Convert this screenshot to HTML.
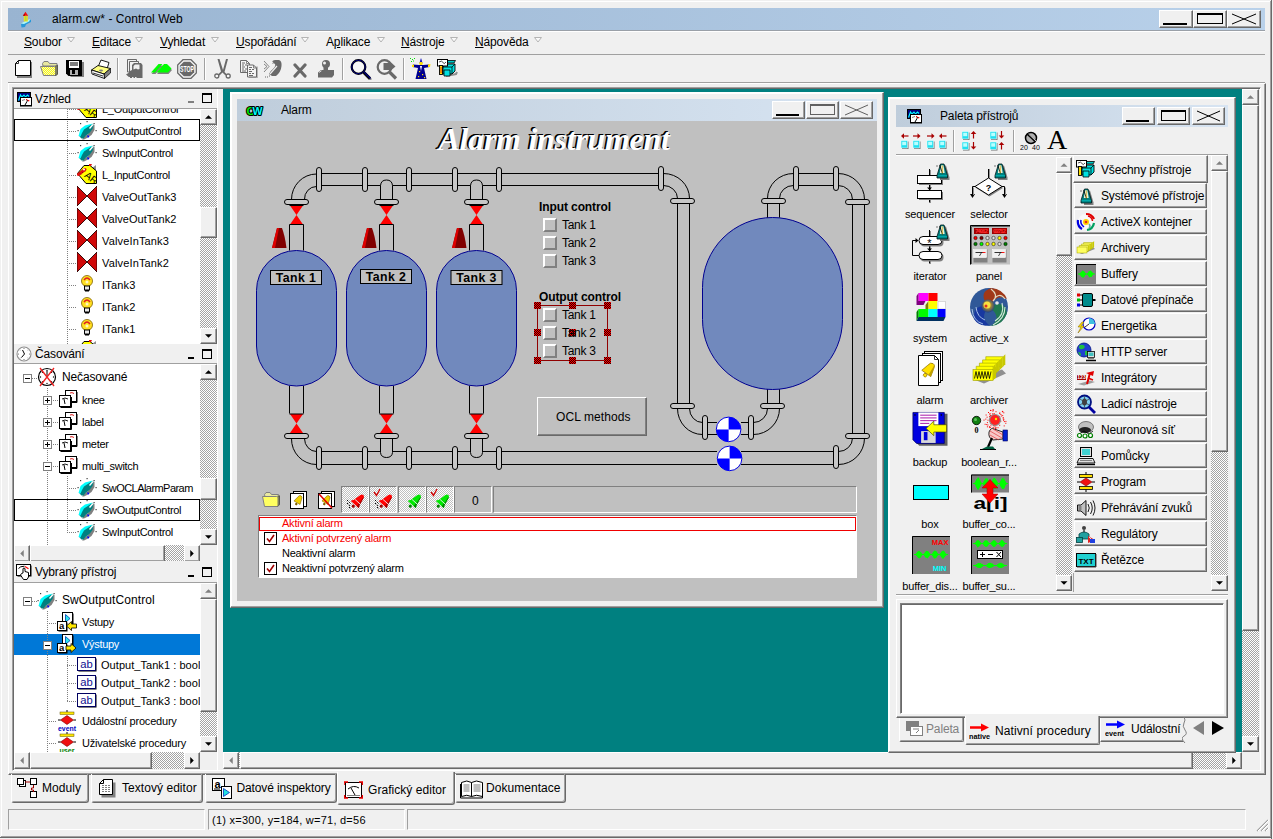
<!DOCTYPE html>
<html lang="cs"><head><meta charset="utf-8"><title>alarm.cw* - Control Web</title>
<style>
html,body{margin:0;padding:0}
body{width:1273px;height:839px;overflow:hidden;background:#f0f0f0;position:relative;
 font-family:"Liberation Sans",sans-serif;font-size:12px;color:#000}
div,span,svg{position:absolute;box-sizing:border-box}
span{white-space:nowrap;line-height:1}
.ui{font-size:12px;letter-spacing:-0.15px}
.ms{font-size:11px;letter-spacing:-0.3px}
.rb{border:1px solid;border-color:#fff #696969 #696969 #fff;background:#f0f0f0}
.rb2{border:1px solid;border-color:#fff #696969 #696969 #fff;background:#f0f0f0;box-shadow:inset -1px -1px 0 #a0a0a0}
.sk{border:1px solid;border-color:#808080 #fff #fff #808080}
.sk2{border:1px solid;border-color:#808080 #fff #fff #808080;box-shadow:inset 1px 1px 0 #696969}
.dith{background-image:conic-gradient(#fff 25%,#a4a4a4 0 50%,#fff 0 75%,#a4a4a4 0);background-size:2px 2px}
.dith2{background-image:conic-gradient(#fff 25%,#c0c0c0 0 50%,#fff 0 75%,#c0c0c0 0);background-size:2px 2px}
.sel{background:#0078d7;color:#fff}
</style></head><body>
<!-- p_chrome -->
<div style="left:0px;top:0px;width:1273px;height:1px;background:#f0f0f0"></div>
<div style="left:1px;top:1px;width:1270px;height:1px;background:#fff"></div>
<div style="left:1px;top:1px;width:1px;height:836px;background:#fff"></div>
<div style="left:1270px;top:1px;width:1px;height:837px;background:#a0a0a0"></div>
<div style="left:1271px;top:0px;width:1px;height:839px;background:#696969"></div>
<div style="left:1px;top:836px;width:1270px;height:1px;background:#a0a0a0"></div>
<div style="left:0px;top:837px;width:1272px;height:1px;background:#696969"></div>
<div style="left:8px;top:8px;width:1257px;height:22px;background:linear-gradient(90deg,rgb(153,180,209),rgb(185,209,234))"></div>
<svg style="left:20px;top:11px;" width="12" height="17" viewBox="0 0 12 17"><path d="M1 13 L7 9.500 L11 8.500 L11 11 L6 13.500 L5 16 L1.500 16.500 Z" fill="#2898d8"/><path d="M1 12.500 L6 9.500 L10.500 8 L9 10.500 L4 13Z" fill="#b0f8f8"/><rect x="3.800" y="4.500" width="4" height="6" fill="#f0d820"/><path d="M5.800 5 v5" stroke="#a0e040" stroke-width="1.200"/><path d="M5.500 0.800 L8.200 4.800 H2.800Z" fill="#f01010"/><path d="M3 4.800 L4.500 2.500 L5 4.800Z" fill="#a00000"/></svg>
<span class="ui" style="left:52px;top:12.5px;letter-spacing:0.04px">alarm.cw* - Control Web</span>
<div class="rb2" style="left:1159px;top:10px;width:34px;height:18px;"><svg style="left:0px;top:0px;" width="32" height="16" viewBox="0 0 32 16"><rect x="3" y="12" width="24" height="2" fill="#000"/></svg>
</div>
<div class="rb2" style="left:1193px;top:10px;width:34px;height:18px;"><svg style="left:0px;top:0px;" width="32" height="16" viewBox="0 0 32 16"><rect x="3.5" y="2.5" width="25" height="10" fill="none" stroke="#000"/><rect x="3" y="2" width="26" height="2" fill="#000"/></svg>
</div>
<div class="rb2" style="left:1227px;top:10px;width:34px;height:18px;"><svg style="left:0px;top:0px;" width="32" height="16" viewBox="0 0 32 16"><path d="M4 3 L28 13 M4 13 L28 3" stroke="#000" stroke-width="1" fill="none"/></svg>
</div>
<span class="ui" style="left:24px;top:36px;"><u>S</u>oubor</span>
<svg style="left:67px;top:37px;" width="9" height="7" viewBox="0 0 9 7"><path d="M0.5 0.5h7l-3.5 4.5z" fill="#fafafa" stroke="#b4b4b4" stroke-width="1"/></svg>
<span class="ui" style="left:92px;top:36px;"><u>E</u>ditace</span>
<svg style="left:135px;top:37px;" width="9" height="7" viewBox="0 0 9 7"><path d="M0.5 0.5h7l-3.5 4.5z" fill="#fafafa" stroke="#b4b4b4" stroke-width="1"/></svg>
<span class="ui" style="left:160px;top:36px;"><u>V</u>yhledat</span>
<svg style="left:211px;top:37px;" width="9" height="7" viewBox="0 0 9 7"><path d="M0.5 0.5h7l-3.5 4.5z" fill="#fafafa" stroke="#b4b4b4" stroke-width="1"/></svg>
<span class="ui" style="left:236px;top:36px;"><u>U</u>spořádání</span>
<svg style="left:301px;top:37px;" width="9" height="7" viewBox="0 0 9 7"><path d="M0.5 0.5h7l-3.5 4.5z" fill="#fafafa" stroke="#b4b4b4" stroke-width="1"/></svg>
<span class="ui" style="left:326px;top:36px;">A<u>p</u>likace</span>
<svg style="left:377px;top:37px;" width="9" height="7" viewBox="0 0 9 7"><path d="M0.5 0.5h7l-3.5 4.5z" fill="#fafafa" stroke="#b4b4b4" stroke-width="1"/></svg>
<span class="ui" style="left:401px;top:36px;"><u>N</u>ástroje</span>
<svg style="left:450px;top:37px;" width="9" height="7" viewBox="0 0 9 7"><path d="M0.5 0.5h7l-3.5 4.5z" fill="#fafafa" stroke="#b4b4b4" stroke-width="1"/></svg>
<span class="ui" style="left:475px;top:36px;"><u>N</u>ápověda</span>
<svg style="left:534px;top:37px;" width="9" height="7" viewBox="0 0 9 7"><path d="M0.5 0.5h7l-3.5 4.5z" fill="#fafafa" stroke="#b4b4b4" stroke-width="1"/></svg>
<div style="left:8px;top:30px;width:1257px;height:1px;background:#9aa0a8"></div>
<div style="left:8px;top:31px;width:1257px;height:1px;background:#fff"></div>
<div style="left:8px;top:54px;width:1257px;height:1px;background:#a0a0a0"></div>
<div style="left:8px;top:82px;width:1257px;height:1px;background:#a0a0a0"></div>
<div style="left:8px;top:83px;width:1257px;height:1px;background:#fff"></div>
<div style="left:117px;top:58px;width:1px;height:22px;background:#a0a0a0"></div>
<div style="left:118px;top:58px;width:1px;height:22px;background:#fff"></div>
<div style="left:204px;top:58px;width:1px;height:22px;background:#a0a0a0"></div>
<div style="left:205px;top:58px;width:1px;height:22px;background:#fff"></div>
<div style="left:342px;top:58px;width:1px;height:22px;background:#a0a0a0"></div>
<div style="left:343px;top:58px;width:1px;height:22px;background:#fff"></div>
<div style="left:403px;top:58px;width:1px;height:22px;background:#a0a0a0"></div>
<div style="left:404px;top:58px;width:1px;height:22px;background:#fff"></div>
<svg style="left:15px;top:60px;" width="18" height="18" viewBox="0 0 18 18"><path d="M3 2h14v16H2V5z" fill="#808080"/><path d="M3.5 0.5H15.5V15.5H0.5V3.5Z" fill="#fff" stroke="#000"/><path d="M3.5 0.5V3.5H0.5" fill="none" stroke="#000" stroke-width=".8"/></svg>
<svg style="left:40px;top:60px;" width="19" height="17" viewBox="0 0 19 17"><defs><pattern id="yd" width="2" height="2" patternUnits="userSpaceOnUse"><rect width="2" height="2" fill="#ffff00"/><rect width="1" height="1" fill="#f0f0d0"/><rect x="1" y="1" width="1" height="1" fill="#f0f0d0"/></pattern></defs><path d="M2.5 3.5 L4 1.5 H8 L9.5 3.5 H17 V6 H3Z" fill="#e8e8a0" stroke="#808080"/><path d="M0.5 6.5 H14.5 L17.5 5 V14.5 L16 15.5 H3.5 Z" fill="url(#yd)" stroke="#808080"/><path d="M15 7 L17.5 5.5 V14 L15 15.5" fill="#808060" stroke="#404040" stroke-width=".6"/></svg>
<svg style="left:66px;top:60px;" width="19" height="18" viewBox="0 0 19 18"><path d="M3 2h15v15H5l-2-2z" fill="#808080"/><path d="M0 0H16V16H2.5L0 13.5Z" fill="#000"/><rect x="3" y="1" width="10" height="7" fill="#fff"/><path d="M4 3h8M4 5h8" stroke="#000" stroke-width="1"/><rect x="4" y="10" width="8" height="5" fill="#b0b0b0"/><rect x="6" y="10" width="3" height="4" fill="#000"/></svg>
<svg style="left:91px;top:59px;" width="21" height="20" viewBox="0 0 21 20"><path d="M7 8 L10 1 L18 3.5 L16 10Z" fill="#fff" stroke="#000" stroke-width=".9"/><path d="M0.5 11 L7 6.5 L19.5 9.5 L13 15Z" fill="#ffff80" stroke="#000" stroke-width=".9"/><path d="M13 15 L19.5 9.5 V14 L13.5 19.5Z" fill="#808080" stroke="#000" stroke-width=".7"/><path d="M0.5 11 L13 15 L13.5 19.5 L1 15Z" fill="#fff" stroke="#000" stroke-width=".9"/><path d="M2 14 L12 17" stroke="#000" stroke-width=".8"/><ellipse cx="10" cy="11.5" rx="2" ry="1" fill="#808080"/></svg>
<svg style="left:126px;top:59px;" width="18" height="20" viewBox="0 0 18 20"><path d="M1.5 0.5H10.5V13H1.5Z" fill="#f0f0f0" stroke="#696969"/><path d="M3.5 2.5H12.5V14H3.5Z" fill="#f0f0f0" stroke="#696969"/><path d="M6 6 L8 4 H15 L16.5 6 V19 H4 L0 15.5 L4 13 V12 L6 11Z" fill="#696969"/><path d="M7.5 7 L9 5.5 H13.5 V10 L12 10.5 L10 9.5 L7.5 10.5Z" fill="#f0f0f0"/><path d="M2 18.5h2M6 18.5h1.5M9 18.5h1.5" stroke="#f0f0f0"/></svg>
<svg style="left:151px;top:63px;" width="22" height="12" viewBox="0 0 22 12"><path d="M0 9.500 L7.500 1 H11.500 L4 9.500Z M5.500 9.500 L13 1 H16 L20.500 5.500 L17 9.500Z" fill="#808080" transform="translate(0.500,1.500)"/><path d="M0 9.500 L7.500 1 H11.500 L4 9.500Z" fill="#00ff00"/><path d="M5.500 9.500 L13 1 H16 L20.500 5.500 L17 9.500Z" fill="#00ff00"/></svg>
<svg style="left:177px;top:59px;" width="20" height="20" viewBox="0 0 20 20"><path d="M6 0.7 H14 L19.3 6 V14 L14 19.3 H6 L0.7 14 V6Z" fill="#f8f8f8" stroke="#696969" stroke-width="1.3"/><path d="M6.8 2.8 H13.2 L17.2 6.8 V13.2 L13.2 17.2 H6.8 L2.8 13.2 V6.8Z" fill="#696969"/><text x="10" y="13.2" text-anchor="middle" font-family="Liberation Sans,sans-serif" font-size="8.5" font-weight="bold" fill="#fff" textLength="14" lengthAdjust="spacingAndGlyphs">STOP</text></svg>
<svg style="left:214px;top:59px;" width="17" height="20" viewBox="0 0 17 20"><path d="M3.5 0 L5.5 0 L9 11 L12 0 L14 0 L10.5 13 L13 15.5 L11.5 16.5 L8.5 13.5 L5.5 16.5 L4 15.5 L7 12.5Z" fill="#696969"/><circle cx="2.8" cy="17" r="2" fill="#f8f8f8" stroke="#696969" stroke-width="1.3"/><circle cx="14.2" cy="17" r="2" fill="#f8f8f8" stroke="#696969" stroke-width="1.3"/></svg>
<svg style="left:240px;top:60px;" width="18" height="18" viewBox="0 0 18 18"><g><path d="M0.5 0.5H6.5L9.5 3.5V12.5H0.5Z" fill="#f4f4f4" stroke="#696969"/><path d="M6.5 0.5V3.5H9.5" fill="none" stroke="#696969" stroke-width=".8"/><path d="M2 3h3M2 5h2M5 5h2M2 7h3M2 9h2M5 9h2M2 11h4" stroke="#696969" stroke-width="1"/></g><g transform="translate(7,4.5)"><path d="M2 2h9v12H2z" fill="#808080" opacity=".5"/><path d="M0.5 0.5H6.5L9.5 3.5V12.5H0.5Z" fill="#f4f4f4" stroke="#696969"/><path d="M6.5 0.5V3.5H9.5" fill="none" stroke="#696969" stroke-width=".8"/><path d="M2 3h3M2 5h2M5 5h2M2 7h3M2 9h2M5 9h2M2 11h4" stroke="#696969" stroke-width="1"/></g></svg>
<svg style="left:263px;top:60px;" width="20" height="18" viewBox="0 0 20 18"><path d="M1 1 L6 6.5 L1 12 M1 4 L4 6.5 L1 9" stroke="#696969" stroke-width=".8" fill="none"/><path d="M9 1.5 Q10 0 12 0 H16 Q19 1 18.5 6 Q18 12 13 16 H9 L6 14 Q7 11 10 9 Q13 6 12 4 Q11 3 9 3.5Z" fill="#696969"/><path d="M14 6 L7 14" stroke="#f0f0f0" stroke-width="1.2"/><circle cx="9.5" cy="2.3" r=".8" fill="#f0f0f0"/><path d="M2 17h1M4 17h1M6 16h1" stroke="#696969"/></svg>
<svg style="left:293px;top:63px;" width="14" height="15" viewBox="0 0 14 15"><path d="M2 2 L12 13 M12 2 L2 13" stroke="#696969" stroke-width="3.2" stroke-linecap="round"/></svg>
<svg style="left:317px;top:60px;" width="18" height="18" viewBox="0 0 18 18"><circle cx="9" cy="4" r="4" fill="#696969"/><circle cx="7.5" cy="3" r="1.5" fill="#f0f0f0"/><path d="M6.5 6 H11 V10 H17 V15 L15 17.5 H1 V12.5 L4 10 H6.5Z" fill="#696969"/><path d="M2 12.5 L4.5 10.8" stroke="#f0f0f0" stroke-width=".8"/></svg>
<svg style="left:350px;top:58px;" width="22" height="22" viewBox="0 0 22 22"><path d="M14 15 L21 22" stroke="#909090" stroke-width="3"/><circle cx="8.5" cy="9" r="6.8" fill="#f8f8f8" stroke="#000" stroke-width="2.2"/><circle cx="8.5" cy="9" r="6.8" fill="none" stroke="#000080" stroke-width="1"/><path d="M13.5 14 L20 20.5" stroke="#000" stroke-width="3"/><path d="M14 14 L20.5 20.5" stroke="#000080" stroke-width="1.2"/></svg>
<svg style="left:376px;top:58px;" width="22" height="22" viewBox="0 0 22 22"><circle cx="8.5" cy="9" r="6.8" fill="#f0f0f0" stroke="#696969" stroke-width="2.2"/><path d="M13.5 14 L20 20.5" stroke="#696969" stroke-width="3.2"/><path d="M7.5 5 H13 V2.5 L19.5 8.5 L13 14 V12 H7.5Z" fill="#696969"/></svg>
<svg style="left:410px;top:58px;" width="22" height="22" viewBox="0 0 22 22"><path d="M11 0 L12.5 5 H9.5Z" fill="#0000c0"/><circle cx="11" cy="5.5" r="1.8" fill="#ffe000"/><path d="M3 6.5 L9 7 H13 L19 6.5 L19.5 9 L14 10 L16.5 21 H5.5 L8 10 L2.5 9Z" fill="#000090"/><path d="M2 7 L4 6.5 L4 9 L2 9Z M18 6.5 L20.5 6 L20 9 L18 9Z" fill="#ffe000"/><path d="M10 8 L11 13 L12 8Z" fill="#fff"/><g fill="#ffe000"><rect x="9" y="13" width="1.2" height="1.2"/><rect x="12" y="16" width="1.2" height="1.2"/><rect x="8" y="18" width="1.2" height="1.2"/><rect x="14" y="19" width="1.2" height="1.2"/></g><g fill="#00e000"><rect x="0" y="0" width="1" height="1"/><rect x="2" y="1" width="1" height="1"/><rect x="4" y="0" width="1" height="1"/><rect x="1" y="3" width="1" height="1"/><rect x="3" y="2.5" width="1" height="1"/></g></svg>
<svg style="left:437px;top:59px;" width="21" height="19" viewBox="0 0 21 19"><path d="M9 17 L19 15 L20 13" stroke="#909090" stroke-width="2" fill="none"/><path d="M6 8 L9 5 H18 V12 L15 15 H6Z" fill="#00e0e0" stroke="#000" stroke-width=".9"/><path d="M9 4 L11 1.5 H18.5 L17 4Z" fill="#00c8c8" stroke="#000" stroke-width=".8"/><path d="M6 8 H15 V15 M15 8 L18 5" stroke="#000" stroke-width=".8" fill="none"/><path d="M7 11 H13 V17 H7Z" fill="#00e0e0" stroke="#000" stroke-width=".8"/><rect x="0.5" y="0.5" width="10" height="6.5" fill="#fff" stroke="#000"/><path d="M2 3 Q5 1 6 3.5 T9 3" stroke="#000" stroke-width=".7" fill="none"/><rect x="2.5" y="6.5" width="3" height="9" fill="#ffe000" stroke="#000" stroke-width=".9"/><path d="M4 8v6" stroke="#e00000" stroke-width=".8"/></svg>

<!-- p_mdi -->
<div style="left:8px;top:83px;width:1258px;height:692px;border:1px solid;border-color:#fff #696969 #696969 #fff;box-shadow:inset -1px -1px 0 #a0a0a0"></div>
<div style="left:12px;top:87px;width:1249px;height:684px;border:1px solid;border-color:#a0a0a0 #fff #fff #a0a0a0;box-shadow:inset 1px 1px 0 #696969"></div>
<div style="left:217px;top:89px;width:6px;height:681px;background:#f0f0f0"></div>
<div style="left:217px;top:89px;width:1px;height:681px;background:#fff"></div>
<div style="left:223px;top:89px;width:1019px;height:663px;background:#008080"></div>
<div class="dith" style="left:1242px;top:89px;width:17px;height:663px;"></div>
<div class="rb2" style="left:1242px;top:89px;width:17px;height:16px;"><svg style="left:0;top:0" width="15" height="14"><polygon points="4,8.75 11,8.75 7.5,5.25" fill="#808080"/></svg></div>
<div class="rb2" style="left:1242px;top:736px;width:17px;height:16px;"><svg style="left:0;top:0" width="15" height="14"><polygon points="4,5.25 11,5.25 7.5,8.75" fill="#000"/></svg></div>
<div class="rb2" style="left:1242px;top:105px;width:17px;height:526px;"></div>
<div class="dith" style="left:223px;top:752px;width:1019px;height:17px;"></div>
<div class="rb2" style="left:223px;top:752px;width:16px;height:17px;"><svg style="left:0;top:0" width="14" height="15"><polygon points="8.75,4 8.75,11 5.25,7.5" fill="#808080"/></svg></div>
<div class="rb2" style="left:1226px;top:752px;width:16px;height:17px;"><svg style="left:0;top:0" width="14" height="15"><polygon points="5.25,4 5.25,11 8.75,7.5" fill="#000"/></svg></div>
<div class="rb2" style="left:240px;top:752px;width:953px;height:17px;"></div>
<div style="left:1242px;top:752px;width:17px;height:17px;background:#f0f0f0"></div>

<!-- p_left -->
<div style="left:14px;top:88px;width:203px;height:20px;background:#f0f0f0"></div>
<svg style="left:17px;top:92px;" width="16" height="15" viewBox="0 0 16 15"><rect x="0.500" y="0.500" width="13" height="9" fill="#000080" stroke="#000"/><path d="M1.500 8.500 L3.500 3 L5 5 L7 3 L8.500 5 L10.500 3 L12 4.500" stroke="#00ffff" fill="none" stroke-width="1.100"/><rect x="3.500" y="5.500" width="11" height="8" fill="#fff" stroke="#000"/><path d="M3 14 h12" stroke="#000" stroke-width="1"/><path d="M5 8.500 l3 -1" stroke="#808080"/><path d="M8 13 L10 9.500 L10.500 8" stroke="#000" stroke-width="1" fill="none"/><rect x="9" y="7" width="1.300" height="1.300" fill="#ff0000"/><rect x="11" y="8" width="1.300" height="1.300" fill="#ff0000"/></svg>
<span class="ui" style="left:35px;top:92.5px;">Vzhled</span>
<div style="left:188px;top:101px;width:6px;height:2px;background:#808080"></div>
<div style="left:202px;top:93px;width:10px;height:10px;border:1px solid #000;border-top-width:2px"></div>
<div style="left:14px;top:108px;width:203px;height:1px;background:#a0a0a0"></div>
<div style="left:14px;top:109px;width:186px;height:235px;overflow:hidden;background:#fff"><div style="left:53px;top:0px;width:1px;height:235px;background-image:linear-gradient(180deg,#808080 50%,transparent 0);background-size:1px 2px"></div>
<div style="left:53px;top:0px;width:10px;height:1px;background-image:linear-gradient(90deg,#808080 50%,transparent 0);background-size:2px 1px"></div>
<svg style="left:63px;top:-11px;" width="20" height="20" viewBox="0 0 20 20"><path d="M1 16 L4 13 L13 19 L19 19 L19 1 L15 4Z" fill="#909090"/><path d="M0.500 9.500 L7 1.500 L13 1.500 L19.500 7 V19.500 H9 Z" fill="#ffff00" stroke="#000" stroke-width="1"/><path d="M1.500 10.500 L8 5.500" stroke="#e01010" stroke-width="3" stroke-linecap="round"/><path d="M3 9.500 l1 1 M5 8 l1 1 M7 6.500 l1 1" stroke="#800000" stroke-width=".8"/><circle cx="7" cy="5.500" r="1" fill="#fff"/><text x="8" y="15" font-family="Liberation Sans,sans-serif" font-size="10" fill="#000" transform="rotate(38 11 12)">AR</text><path d="M12 0 h3 l-1 2 h-2z" fill="#e01010"/></svg>
<span style="left:88px;top:-5.5px;font-size:11px;letter-spacing:-0.3px;">L_OutputControl</span>
<div style="left:53px;top:22px;width:10px;height:1px;background-image:linear-gradient(90deg,#808080 50%,transparent 0);background-size:2px 1px"></div>
<svg style="left:63px;top:11px;" width="20" height="20" viewBox="0 0 20 20"><path d="M5 19.5 L8 16 L11 14 L14 10 L16 5 L17.5 5 L17.5 10 L14.5 15 L10 18 L7 19.5Z" fill="#808080"/><path d="M2.500 16.500 L4.500 10 L9 6 L16 4 L16.500 5 L15.500 9 L12.500 13 L9 15.500 L6.500 18.500 L4.500 18.500Z" fill="#008080"/><path d="M1.500 16 L3.500 9 L8 5.500 L16 3.500 L11.500 6.500 L7 9.500 L5 13 L3.500 16.500Z" fill="#00ffff"/><path d="M12.500 8.500 L16 4.500" stroke="#fff" stroke-width="1.300"/><path d="M10.500 15.500 l1.500 1.500 M10.500 17 h1" stroke="#0000ff" stroke-width="1.100"/><g fill="#404040"><rect x="3" y="3" width="1.200" height="1.200"/><rect x="9.500" y="1" width="1.200" height="1.200"/><rect x="16.500" y="3" width="1.200" height="1.200"/><rect x="18.500" y="10" width="1.200" height="1.200"/><rect x="0.500" y="10" width="1.200" height="1.200"/></g></svg>
<span style="left:88px;top:16.5px;font-size:11px;letter-spacing:-0.3px;">SwOutputControl</span>
<div style="left:53px;top:44px;width:10px;height:1px;background-image:linear-gradient(90deg,#808080 50%,transparent 0);background-size:2px 1px"></div>
<svg style="left:63px;top:33px;" width="20" height="20" viewBox="0 0 20 20"><path d="M5 19.5 L8 16 L11 14 L14 10 L16 5 L17.5 5 L17.5 10 L14.5 15 L10 18 L7 19.5Z" fill="#808080"/><path d="M2.500 16.500 L4.500 10 L9 6 L16 4 L16.500 5 L15.500 9 L12.500 13 L9 15.500 L6.500 18.500 L4.500 18.500Z" fill="#008080"/><path d="M1.500 16 L3.500 9 L8 5.500 L16 3.500 L11.500 6.500 L7 9.500 L5 13 L3.500 16.500Z" fill="#00ffff"/><path d="M12.500 8.500 L16 4.500" stroke="#fff" stroke-width="1.300"/><path d="M10.500 15.500 l1.500 1.500 M10.500 17 h1" stroke="#0000ff" stroke-width="1.100"/><g fill="#404040"><rect x="3" y="3" width="1.200" height="1.200"/><rect x="9.500" y="1" width="1.200" height="1.200"/><rect x="16.500" y="3" width="1.200" height="1.200"/><rect x="18.500" y="10" width="1.200" height="1.200"/><rect x="0.500" y="10" width="1.200" height="1.200"/></g></svg>
<span style="left:88px;top:38.5px;font-size:11px;letter-spacing:-0.3px;">SwInputControl</span>
<div style="left:53px;top:66px;width:10px;height:1px;background-image:linear-gradient(90deg,#808080 50%,transparent 0);background-size:2px 1px"></div>
<svg style="left:63px;top:55px;" width="20" height="20" viewBox="0 0 20 20"><path d="M1 16 L4 13 L13 19 L19 19 L19 1 L15 4Z" fill="#909090"/><path d="M0.500 9.500 L7 1.500 L13 1.500 L19.500 7 V19.500 H9 Z" fill="#ffff00" stroke="#000" stroke-width="1"/><path d="M1.500 10.500 L8 5.500" stroke="#e01010" stroke-width="3" stroke-linecap="round"/><path d="M3 9.500 l1 1 M5 8 l1 1 M7 6.500 l1 1" stroke="#800000" stroke-width=".8"/><circle cx="7" cy="5.500" r="1" fill="#fff"/><text x="8" y="15" font-family="Liberation Sans,sans-serif" font-size="10" fill="#000" transform="rotate(38 11 12)">AR</text><path d="M12 0 h3 l-1 2 h-2z" fill="#e01010"/></svg>
<span style="left:88px;top:60.5px;font-size:11px;letter-spacing:-0.3px;">L_InputControl</span>
<div style="left:53px;top:88px;width:10px;height:1px;background-image:linear-gradient(90deg,#808080 50%,transparent 0);background-size:2px 1px"></div>
<svg style="left:63px;top:77px;" width="20" height="20" viewBox="0 0 20 20"><path d="M0 0 L10 10 L0 20 Z M20 0 L10 10 L20 20 Z" fill="#d00808"/><path d="M0 0 L10 10 L0 20 Z M20 0 L10 10 L20 20 Z" fill="none" stroke="#200000" stroke-width="0.9"/></svg>
<span style="left:88px;top:82.5px;font-size:11px;letter-spacing:-0.3px;letter-spacing:0.05px">ValveOutTank3</span>
<div style="left:53px;top:110px;width:10px;height:1px;background-image:linear-gradient(90deg,#808080 50%,transparent 0);background-size:2px 1px"></div>
<svg style="left:63px;top:99px;" width="20" height="20" viewBox="0 0 20 20"><path d="M0 0 L10 10 L0 20 Z M20 0 L10 10 L20 20 Z" fill="#d00808"/><path d="M0 0 L10 10 L0 20 Z M20 0 L10 10 L20 20 Z" fill="none" stroke="#200000" stroke-width="0.9"/></svg>
<span style="left:88px;top:104.5px;font-size:11px;letter-spacing:-0.3px;letter-spacing:0.05px">ValveOutTank2</span>
<div style="left:53px;top:132px;width:10px;height:1px;background-image:linear-gradient(90deg,#808080 50%,transparent 0);background-size:2px 1px"></div>
<svg style="left:63px;top:121px;" width="20" height="20" viewBox="0 0 20 20"><path d="M0 0 L10 10 L0 20 Z M20 0 L10 10 L20 20 Z" fill="#d00808"/><path d="M0 0 L10 10 L0 20 Z M20 0 L10 10 L20 20 Z" fill="none" stroke="#200000" stroke-width="0.9"/></svg>
<span style="left:88px;top:126.5px;font-size:11px;letter-spacing:-0.3px;letter-spacing:0.15px">ValveInTank3</span>
<div style="left:53px;top:154px;width:10px;height:1px;background-image:linear-gradient(90deg,#808080 50%,transparent 0);background-size:2px 1px"></div>
<svg style="left:63px;top:143px;" width="20" height="20" viewBox="0 0 20 20"><path d="M0 0 L10 10 L0 20 Z M20 0 L10 10 L20 20 Z" fill="#d00808"/><path d="M0 0 L10 10 L0 20 Z M20 0 L10 10 L20 20 Z" fill="none" stroke="#200000" stroke-width="0.9"/></svg>
<span style="left:88px;top:148.5px;font-size:11px;letter-spacing:-0.3px;letter-spacing:0.15px">ValveInTank2</span>
<div style="left:53px;top:176px;width:10px;height:1px;background-image:linear-gradient(90deg,#808080 50%,transparent 0);background-size:2px 1px"></div>
<svg style="left:63px;top:165px;" width="20" height="20" viewBox="0 0 20 20"><circle cx="10" cy="7" r="5.5" fill="#ffe020" stroke="#806000" stroke-width="0.8"/><path d="M7 6 Q10 2 13 6" stroke="#e02020" stroke-width="1.5" fill="none"/><circle cx="10" cy="8" r="1.5" fill="#fff8c0"/><rect x="7.5" y="12" width="5" height="4" fill="#e8e8e8" stroke="#000" stroke-width="1"/><rect x="8" y="16" width="4" height="1.5" fill="#000"/></svg>
<span style="left:88px;top:170.5px;font-size:11px;letter-spacing:-0.3px;letter-spacing:0.2px">ITank3</span>
<div style="left:53px;top:198px;width:10px;height:1px;background-image:linear-gradient(90deg,#808080 50%,transparent 0);background-size:2px 1px"></div>
<svg style="left:63px;top:187px;" width="20" height="20" viewBox="0 0 20 20"><circle cx="10" cy="7" r="5.5" fill="#ffe020" stroke="#806000" stroke-width="0.8"/><path d="M7 6 Q10 2 13 6" stroke="#e02020" stroke-width="1.5" fill="none"/><circle cx="10" cy="8" r="1.5" fill="#fff8c0"/><rect x="7.5" y="12" width="5" height="4" fill="#e8e8e8" stroke="#000" stroke-width="1"/><rect x="8" y="16" width="4" height="1.5" fill="#000"/></svg>
<span style="left:88px;top:192.5px;font-size:11px;letter-spacing:-0.3px;letter-spacing:0.2px">ITank2</span>
<div style="left:53px;top:220px;width:10px;height:1px;background-image:linear-gradient(90deg,#808080 50%,transparent 0);background-size:2px 1px"></div>
<svg style="left:63px;top:209px;" width="20" height="20" viewBox="0 0 20 20"><circle cx="10" cy="7" r="5.5" fill="#ffe020" stroke="#806000" stroke-width="0.8"/><path d="M7 6 Q10 2 13 6" stroke="#e02020" stroke-width="1.5" fill="none"/><circle cx="10" cy="8" r="1.5" fill="#fff8c0"/><rect x="7.5" y="12" width="5" height="4" fill="#e8e8e8" stroke="#000" stroke-width="1"/><rect x="8" y="16" width="4" height="1.5" fill="#000"/></svg>
<span style="left:88px;top:214.5px;font-size:11px;letter-spacing:-0.3px;letter-spacing:0.2px">ITank1</span>
<div style="left:53px;top:242px;width:10px;height:1px;background-image:linear-gradient(90deg,#808080 50%,transparent 0);background-size:2px 1px"></div>
<svg style="left:63px;top:231px;" width="20" height="20" viewBox="0 0 20 20"><path d="M1 16 L4 13 L13 19 L19 19 L19 1 L15 4Z" fill="#909090"/><path d="M0.500 9.500 L7 1.500 L13 1.500 L19.500 7 V19.500 H9 Z" fill="#ffff00" stroke="#000" stroke-width="1"/><path d="M1.500 10.500 L8 5.500" stroke="#e01010" stroke-width="3" stroke-linecap="round"/><path d="M3 9.500 l1 1 M5 8 l1 1 M7 6.500 l1 1" stroke="#800000" stroke-width=".8"/><circle cx="7" cy="5.500" r="1" fill="#fff"/><text x="8" y="15" font-family="Liberation Sans,sans-serif" font-size="10" fill="#000" transform="rotate(38 11 12)">AR</text><path d="M12 0 h3 l-1 2 h-2z" fill="#e01010"/></svg>
<div style="left:0px;top:10px;width:186px;height:22px;border:1px solid #000"></div>
</div>
<div class="dith" style="left:200px;top:109px;width:17px;height:235px;"></div>
<div class="rb2" style="left:200px;top:109px;width:17px;height:16px;"><svg style="left:0;top:0" width="15" height="14"><polygon points="4,8.75 11,8.75 7.5,5.25" fill="#000"/></svg></div>
<div class="rb2" style="left:200px;top:328px;width:17px;height:16px;"><svg style="left:0;top:0" width="15" height="14"><polygon points="4,5.25 11,5.25 7.5,8.75" fill="#000"/></svg></div>
<div class="rb2" style="left:200px;top:207px;width:17px;height:31px;"></div>
<div style="left:14px;top:344px;width:203px;height:20px;background:#f0f0f0"></div>
<svg style="left:15px;top:344.5px;" width="18" height="18" viewBox="0 0 18 18"><circle cx="9" cy="9" r="7" fill="#fff" stroke="#909090" stroke-width="1.1"/><g fill="#606060"><circle cx="9" cy="3.500" r=".55"/><circle cx="9" cy="14.500" r=".55"/><circle cx="3.500" cy="9" r=".55"/><circle cx="14.500" cy="9" r=".55"/><circle cx="5.100" cy="5.100" r=".45"/><circle cx="12.900" cy="5.100" r=".45"/><circle cx="5.100" cy="12.900" r=".45"/><circle cx="12.900" cy="12.900" r=".45"/></g><path d="M7.500 5 L9.500 9 L6.500 12.500" stroke="#000" stroke-width="1" fill="none"/></svg>
<span class="ui" style="left:35px;top:347.5px;">Časování</span>
<div style="left:188px;top:357px;width:6px;height:2px;background:#000"></div>
<div style="left:202px;top:349px;width:10px;height:10px;border:1px solid #000;border-top-width:2px"></div>
<div style="left:14px;top:363px;width:203px;height:1px;background:#a0a0a0"></div>
<div style="left:14px;top:364px;width:186px;height:181px;overflow:hidden;background:#fff"><div style="left:33px;top:24px;width:1px;height:172px;background-image:linear-gradient(180deg,#808080 50%,transparent 0);background-size:1px 2px"></div>
<div style="left:53px;top:112px;width:1px;height:56px;background-image:linear-gradient(180deg,#808080 50%,transparent 0);background-size:1px 2px"></div>
<div style="left:18px;top:14px;width:6px;height:1px;background-image:linear-gradient(90deg,#808080 50%,transparent 0);background-size:2px 1px"></div>
<div style="left:9px;top:10px;width:9px;height:9px;border:1px solid #808080;background:#fff"></div>
<div style="left:11px;top:14px;width:5px;height:1px;background:#000"></div>
<svg style="left:23px;top:3px;" width="20" height="20" viewBox="0 0 20 20"><circle cx="10" cy="10" r="8.5" fill="#fff" stroke="#000" stroke-width="1.2"/><g fill="#000"><circle cx="10" cy="3.5" r=".7"/><circle cx="10" cy="16.5" r=".7"/><circle cx="3.5" cy="10" r=".7"/><circle cx="16.5" cy="10" r=".7"/><circle cx="5.4" cy="5.4" r=".6"/><circle cx="14.6" cy="5.4" r=".6"/><circle cx="5.4" cy="14.6" r=".6"/><circle cx="14.6" cy="14.6" r=".6"/></g><path d="M10 4v6" stroke="#000" stroke-width="1"/><path d="M3 1 L17 19 M17 1 L3 19" stroke="#f02020" stroke-width="1.3"/></svg>
<span class="ui" style="left:48px;top:7px;">Nečasované</span>
<div style="left:33px;top:36px;width:11px;height:1px;background-image:linear-gradient(90deg,#808080 50%,transparent 0);background-size:2px 1px"></div>
<div style="left:29px;top:32px;width:9px;height:9px;border:1px solid #808080;background:#fff"></div>
<div style="left:31px;top:36px;width:5px;height:1px;background:#000"></div>
<div style="left:33px;top:34px;width:1px;height:5px;background:#000"></div>
<svg style="left:44px;top:25px;" width="20" height="20" viewBox="0 0 20 20"><rect x="7.5" y="1.5" width="11" height="11" fill="#fff" stroke="#000" stroke-width="1"/><path d="M19 3v10.5h-10" stroke="#000" stroke-width="1" fill="none"/><rect x="1.5" y="6.5" width="11" height="11" fill="#fff" stroke="#000" stroke-width="1"/><path d="M13.5 8v10.5h-11" stroke="#000" stroke-width="1" fill="none"/><path d="M4 10 Q7 8 10 10" stroke="#000" stroke-width=".9" fill="none"/><path d="M7 15 L6 10" stroke="#000" stroke-width="1"/><path d="M12 4 Q14 3 16 4.5" stroke="#e02020" stroke-width="1" fill="none"/></svg>
<span style="left:68px;top:30.5px;font-size:11px;letter-spacing:-0.3px;">knee</span>
<div style="left:33px;top:58px;width:11px;height:1px;background-image:linear-gradient(90deg,#808080 50%,transparent 0);background-size:2px 1px"></div>
<div style="left:29px;top:54px;width:9px;height:9px;border:1px solid #808080;background:#fff"></div>
<div style="left:31px;top:58px;width:5px;height:1px;background:#000"></div>
<div style="left:33px;top:56px;width:1px;height:5px;background:#000"></div>
<svg style="left:44px;top:47px;" width="20" height="20" viewBox="0 0 20 20"><rect x="7.5" y="1.5" width="11" height="11" fill="#fff" stroke="#000" stroke-width="1"/><path d="M19 3v10.5h-10" stroke="#000" stroke-width="1" fill="none"/><rect x="1.5" y="6.5" width="11" height="11" fill="#fff" stroke="#000" stroke-width="1"/><path d="M13.5 8v10.5h-11" stroke="#000" stroke-width="1" fill="none"/><path d="M4 10 Q7 8 10 10" stroke="#000" stroke-width=".9" fill="none"/><path d="M7 15 L6 10" stroke="#000" stroke-width="1"/><path d="M12 4 Q14 3 16 4.5" stroke="#e02020" stroke-width="1" fill="none"/></svg>
<span style="left:68px;top:52.5px;font-size:11px;letter-spacing:-0.3px;">label</span>
<div style="left:33px;top:80px;width:11px;height:1px;background-image:linear-gradient(90deg,#808080 50%,transparent 0);background-size:2px 1px"></div>
<div style="left:29px;top:76px;width:9px;height:9px;border:1px solid #808080;background:#fff"></div>
<div style="left:31px;top:80px;width:5px;height:1px;background:#000"></div>
<div style="left:33px;top:78px;width:1px;height:5px;background:#000"></div>
<svg style="left:44px;top:69px;" width="20" height="20" viewBox="0 0 20 20"><rect x="7.5" y="1.5" width="11" height="11" fill="#fff" stroke="#000" stroke-width="1"/><path d="M19 3v10.5h-10" stroke="#000" stroke-width="1" fill="none"/><rect x="1.5" y="6.5" width="11" height="11" fill="#fff" stroke="#000" stroke-width="1"/><path d="M13.5 8v10.5h-11" stroke="#000" stroke-width="1" fill="none"/><path d="M4 10 Q7 8 10 10" stroke="#000" stroke-width=".9" fill="none"/><path d="M7 15 L6 10" stroke="#000" stroke-width="1"/><path d="M12 4 Q14 3 16 4.5" stroke="#e02020" stroke-width="1" fill="none"/></svg>
<span style="left:68px;top:74.5px;font-size:11px;letter-spacing:-0.3px;">meter</span>
<div style="left:33px;top:102px;width:11px;height:1px;background-image:linear-gradient(90deg,#808080 50%,transparent 0);background-size:2px 1px"></div>
<div style="left:29px;top:98px;width:9px;height:9px;border:1px solid #808080;background:#fff"></div>
<div style="left:31px;top:102px;width:5px;height:1px;background:#000"></div>
<svg style="left:44px;top:91px;" width="20" height="20" viewBox="0 0 20 20"><rect x="7.5" y="1.5" width="11" height="11" fill="#fff" stroke="#000" stroke-width="1"/><path d="M19 3v10.5h-10" stroke="#000" stroke-width="1" fill="none"/><rect x="1.5" y="6.5" width="11" height="11" fill="#fff" stroke="#000" stroke-width="1"/><path d="M13.5 8v10.5h-11" stroke="#000" stroke-width="1" fill="none"/><path d="M4 10 Q7 8 10 10" stroke="#000" stroke-width=".9" fill="none"/><path d="M7 15 L6 10" stroke="#000" stroke-width="1"/><path d="M12 4 Q14 3 16 4.5" stroke="#e02020" stroke-width="1" fill="none"/></svg>
<span style="left:68px;top:96.5px;font-size:11px;letter-spacing:-0.3px;">multi_switch</span>
<div style="left:53px;top:124px;width:10px;height:1px;background-image:linear-gradient(90deg,#808080 50%,transparent 0);background-size:2px 1px"></div>
<svg style="left:63px;top:113px;" width="20" height="20" viewBox="0 0 20 20"><path d="M5 19.5 L8 16 L11 14 L14 10 L16 5 L17.5 5 L17.5 10 L14.5 15 L10 18 L7 19.5Z" fill="#808080"/><path d="M2.500 16.500 L4.500 10 L9 6 L16 4 L16.500 5 L15.500 9 L12.500 13 L9 15.500 L6.500 18.500 L4.500 18.500Z" fill="#008080"/><path d="M1.500 16 L3.500 9 L8 5.500 L16 3.500 L11.500 6.500 L7 9.500 L5 13 L3.500 16.500Z" fill="#00ffff"/><path d="M12.500 8.500 L16 4.500" stroke="#fff" stroke-width="1.300"/><path d="M10.500 15.500 l1.500 1.500 M10.500 17 h1" stroke="#0000ff" stroke-width="1.100"/><g fill="#404040"><rect x="3" y="3" width="1.200" height="1.200"/><rect x="9.500" y="1" width="1.200" height="1.200"/><rect x="16.500" y="3" width="1.200" height="1.200"/><rect x="18.500" y="10" width="1.200" height="1.200"/><rect x="0.500" y="10" width="1.200" height="1.200"/></g></svg>
<span style="left:88px;top:118.5px;font-size:11px;letter-spacing:-0.3px;letter-spacing:-0.55px">SwOCLAlarmParam</span>
<div style="left:53px;top:146px;width:10px;height:1px;background-image:linear-gradient(90deg,#808080 50%,transparent 0);background-size:2px 1px"></div>
<svg style="left:63px;top:135px;" width="20" height="20" viewBox="0 0 20 20"><path d="M5 19.5 L8 16 L11 14 L14 10 L16 5 L17.5 5 L17.5 10 L14.5 15 L10 18 L7 19.5Z" fill="#808080"/><path d="M2.500 16.500 L4.500 10 L9 6 L16 4 L16.500 5 L15.500 9 L12.500 13 L9 15.500 L6.500 18.500 L4.500 18.500Z" fill="#008080"/><path d="M1.500 16 L3.500 9 L8 5.500 L16 3.500 L11.500 6.500 L7 9.500 L5 13 L3.500 16.500Z" fill="#00ffff"/><path d="M12.500 8.500 L16 4.500" stroke="#fff" stroke-width="1.300"/><path d="M10.500 15.500 l1.500 1.500 M10.500 17 h1" stroke="#0000ff" stroke-width="1.100"/><g fill="#404040"><rect x="3" y="3" width="1.200" height="1.200"/><rect x="9.500" y="1" width="1.200" height="1.200"/><rect x="16.500" y="3" width="1.200" height="1.200"/><rect x="18.500" y="10" width="1.200" height="1.200"/><rect x="0.500" y="10" width="1.200" height="1.200"/></g></svg>
<span style="left:88px;top:140.5px;font-size:11px;letter-spacing:-0.3px;">SwOutputControl</span>
<div style="left:53px;top:168px;width:10px;height:1px;background-image:linear-gradient(90deg,#808080 50%,transparent 0);background-size:2px 1px"></div>
<svg style="left:63px;top:157px;" width="20" height="20" viewBox="0 0 20 20"><path d="M5 19.5 L8 16 L11 14 L14 10 L16 5 L17.5 5 L17.5 10 L14.5 15 L10 18 L7 19.5Z" fill="#808080"/><path d="M2.500 16.500 L4.500 10 L9 6 L16 4 L16.500 5 L15.500 9 L12.500 13 L9 15.500 L6.500 18.500 L4.500 18.500Z" fill="#008080"/><path d="M1.500 16 L3.500 9 L8 5.500 L16 3.500 L11.500 6.500 L7 9.500 L5 13 L3.500 16.500Z" fill="#00ffff"/><path d="M12.500 8.500 L16 4.500" stroke="#fff" stroke-width="1.300"/><path d="M10.500 15.500 l1.500 1.500 M10.500 17 h1" stroke="#0000ff" stroke-width="1.100"/><g fill="#404040"><rect x="3" y="3" width="1.200" height="1.200"/><rect x="9.500" y="1" width="1.200" height="1.200"/><rect x="16.500" y="3" width="1.200" height="1.200"/><rect x="18.500" y="10" width="1.200" height="1.200"/><rect x="0.500" y="10" width="1.200" height="1.200"/></g></svg>
<span style="left:88px;top:162.5px;font-size:11px;letter-spacing:-0.3px;">SwInputControl</span>
<div style="left:0px;top:135px;width:186px;height:22px;border:1px solid #000"></div>
</div>
<div class="dith" style="left:200px;top:364px;width:17px;height:181px;"></div>
<div class="rb2" style="left:200px;top:364px;width:17px;height:16px;"><svg style="left:0;top:0" width="15" height="14"><polygon points="4,8.75 11,8.75 7.5,5.25" fill="#000"/></svg></div>
<div class="rb2" style="left:200px;top:529px;width:17px;height:16px;"><svg style="left:0;top:0" width="15" height="14"><polygon points="4,5.25 11,5.25 7.5,8.75" fill="#000"/></svg></div>
<div class="rb2" style="left:200px;top:478px;width:17px;height:22px;"></div>
<div class="dith" style="left:14px;top:545px;width:186px;height:17px;"></div>
<div class="rb2" style="left:14px;top:545px;width:16px;height:17px;"><svg style="left:0;top:0" width="14" height="15"><polygon points="8.75,4 8.75,11 5.25,7.5" fill="#808080"/></svg></div>
<div class="rb2" style="left:184px;top:545px;width:16px;height:17px;"><svg style="left:0;top:0" width="14" height="15"><polygon points="5.25,4 5.25,11 8.75,7.5" fill="#000"/></svg></div>
<div class="rb2" style="left:30px;top:545px;width:135px;height:17px;"></div>
<div style="left:200px;top:545px;width:17px;height:17px;background:#f0f0f0"></div>
<div style="left:14px;top:561px;width:203px;height:1px;background:#f0f0f0"></div>
<div style="left:14px;top:562px;width:203px;height:20px;background:#f0f0f0"></div>
<svg style="left:16px;top:564px;" width="17" height="17" viewBox="0 0 17 17"><rect x="1.500" y="1.500" width="14" height="11" fill="#000"/><rect x="0.500" y="0.500" width="14" height="11" fill="#fff" stroke="#000"/><path d="M2.500 4.500 Q4 2.200 8.500 2.200" stroke="#000" fill="none"/><path d="M9 2.500 L12.500 4.800" stroke="#ff0000" stroke-width="1.200"/><path d="M7 9 V4.500 Q8 3.500 9 4.500 V7.500 L12.500 8.500 V13 L11 15.500 H7.500 L4.500 11 L5.500 9.500 Z" fill="#fff" stroke="#000" stroke-width="1"/></svg>
<span class="ui" style="left:35px;top:565.5px;">Vybraný přístroj</span>
<div style="left:188px;top:575px;width:6px;height:2px;background:#000"></div>
<div style="left:202px;top:567px;width:10px;height:10px;border:1px solid #000;border-top-width:2px"></div>
<div style="left:14px;top:582px;width:203px;height:1px;background:#a0a0a0"></div>
<div style="left:14px;top:583px;width:186px;height:169px;overflow:hidden;background:#fff"><div style="left:0px;top:51px;width:186px;height:21px;background:#0078d7"></div>
<div style="left:33px;top:28px;width:1px;height:149px;background-image:linear-gradient(180deg,#808080 50%,transparent 0);background-size:1px 2px"></div>
<div style="left:53px;top:73px;width:1px;height:45px;background-image:linear-gradient(180deg,#808080 50%,transparent 0);background-size:1px 2px"></div>
<div style="left:18px;top:18px;width:6px;height:1px;background-image:linear-gradient(90deg,#808080 50%,transparent 0);background-size:2px 1px"></div>
<div style="left:9px;top:14px;width:9px;height:9px;border:1px solid #808080;background:#fff"></div>
<div style="left:11px;top:18px;width:5px;height:1px;background:#000"></div>
<svg style="left:23px;top:7px;" width="20" height="20" viewBox="0 0 20 20"><path d="M5 19.5 L8 16 L11 14 L14 10 L16 5 L17.5 5 L17.5 10 L14.5 15 L10 18 L7 19.5Z" fill="#808080"/><path d="M2.500 16.500 L4.500 10 L9 6 L16 4 L16.500 5 L15.500 9 L12.500 13 L9 15.500 L6.500 18.500 L4.500 18.500Z" fill="#008080"/><path d="M1.500 16 L3.500 9 L8 5.500 L16 3.500 L11.500 6.500 L7 9.500 L5 13 L3.500 16.500Z" fill="#00ffff"/><path d="M12.500 8.500 L16 4.500" stroke="#fff" stroke-width="1.300"/><path d="M10.500 15.500 l1.500 1.500 M10.500 17 h1" stroke="#0000ff" stroke-width="1.100"/><g fill="#404040"><rect x="3" y="3" width="1.200" height="1.200"/><rect x="9.500" y="1" width="1.200" height="1.200"/><rect x="16.500" y="3" width="1.200" height="1.200"/><rect x="18.500" y="10" width="1.200" height="1.200"/><rect x="0.500" y="10" width="1.200" height="1.200"/></g></svg>
<span class="ui" style="left:48px;top:11px;letter-spacing:0.1px">SwOutputControl</span>
<div style="left:33px;top:40px;width:10px;height:1px;background-image:linear-gradient(90deg,#808080 50%,transparent 0);background-size:2px 1px"></div>
<svg style="left:43px;top:29px;" width="20" height="20" viewBox="0 0 20 20"><rect x="6.500" y="1.500" width="10" height="13" fill="#000"/><rect x="5.500" y="0.500" width="10" height="13" fill="#fff" stroke="#000" stroke-width="1"/><path d="M8.500 2.500 L13 6.500 L8.500 10.500 Z" fill="#30e8e8" stroke="#0050c0" stroke-width=".9"/><rect x="1.500" y="10.500" width="9" height="9" fill="#000"/><rect x="0.500" y="9.500" width="9" height="9" fill="#fff" stroke="#000" stroke-width="1"/><text x="2" y="17" font-family="Liberation Sans,sans-serif" font-size="9.500" font-weight="bold" fill="#000">a</text><path d="M19.500 12 h-5 v-2.500 l-5 4.500 l5 4.500 v-2.500 h5z" fill="#ffe800" stroke="#000" stroke-width=".8"/></svg>
<span style="left:68px;top:34px;font-size:11px;letter-spacing:-0.3px;">Vstupy</span>
<div style="left:29px;top:58px;width:9px;height:9px;border:1px solid #808080;background:#fff"></div>
<div style="left:31px;top:62px;width:5px;height:1px;background:#000"></div>
<svg style="left:43px;top:51px;" width="20" height="20" viewBox="0 0 20 20"><rect x="6.500" y="1.500" width="10" height="13" fill="#000"/><rect x="5.500" y="0.500" width="10" height="13" fill="#fff" stroke="#000" stroke-width="1"/><path d="M8.500 2.500 L13 6.500 L8.500 10.500 Z" fill="#30e8e8" stroke="#0050c0" stroke-width=".9"/><rect x="1.500" y="10.500" width="9" height="9" fill="#000"/><rect x="0.500" y="9.500" width="9" height="9" fill="#fff" stroke="#000" stroke-width="1"/><text x="2" y="17" font-family="Liberation Sans,sans-serif" font-size="9.500" font-weight="bold" fill="#000">a</text><path d="M9 12 h5 v-2.500 l5 4.500 l-5 4.500 v-2.500 h-5z" fill="#ffe800" stroke="#000" stroke-width=".8"/></svg>
<span style="left:68px;top:56px;font-size:11px;letter-spacing:-0.3px;color:#fff">Výstupy</span>
<div style="left:53px;top:82px;width:10px;height:1px;background-image:linear-gradient(90deg,#808080 50%,transparent 0);background-size:2px 1px"></div>
<svg style="left:63px;top:74px;" width="20" height="15" viewBox="0 0 20 15"><rect x="1.500" y="1.500" width="18" height="13" fill="#000"/><rect x="0.500" y="0.500" width="18" height="13" fill="#fff" stroke="#000060" stroke-width="1"/><text x="9.500" y="10.800" text-anchor="middle" font-family="Liberation Sans,sans-serif" font-size="11" fill="#101090" textLength="12.500" lengthAdjust="spacingAndGlyphs">ab</text></svg>
<span style="left:87px;top:76.5px;font-size:11px;letter-spacing:-0.3px;letter-spacing:0.05px">Output_Tank1 : bool</span>
<div style="left:53px;top:100px;width:10px;height:1px;background-image:linear-gradient(90deg,#808080 50%,transparent 0);background-size:2px 1px"></div>
<svg style="left:63px;top:92px;" width="20" height="15" viewBox="0 0 20 15"><rect x="1.500" y="1.500" width="18" height="13" fill="#000"/><rect x="0.500" y="0.500" width="18" height="13" fill="#fff" stroke="#000060" stroke-width="1"/><text x="9.500" y="10.800" text-anchor="middle" font-family="Liberation Sans,sans-serif" font-size="11" fill="#101090" textLength="12.500" lengthAdjust="spacingAndGlyphs">ab</text></svg>
<span style="left:87px;top:94.5px;font-size:11px;letter-spacing:-0.3px;letter-spacing:0.05px">Output_Tank2 : bool</span>
<div style="left:53px;top:118px;width:10px;height:1px;background-image:linear-gradient(90deg,#808080 50%,transparent 0);background-size:2px 1px"></div>
<svg style="left:63px;top:110px;" width="20" height="15" viewBox="0 0 20 15"><rect x="1.500" y="1.500" width="18" height="13" fill="#000"/><rect x="0.500" y="0.500" width="18" height="13" fill="#fff" stroke="#000060" stroke-width="1"/><text x="9.500" y="10.800" text-anchor="middle" font-family="Liberation Sans,sans-serif" font-size="11" fill="#101090" textLength="12.500" lengthAdjust="spacingAndGlyphs">ab</text></svg>
<span style="left:87px;top:112.5px;font-size:11px;letter-spacing:-0.3px;letter-spacing:0.05px">Output_Tank3 : bool</span>
<div style="left:33px;top:138px;width:10px;height:1px;background-image:linear-gradient(90deg,#808080 50%,transparent 0);background-size:2px 1px"></div>
<svg style="left:42px;top:126.5px;" width="22" height="23" viewBox="0 0 22 23"><path d="M11 0v2" stroke="#000" stroke-width="1"/><rect x="4" y="2" width="14" height="2.500" fill="#ffe800" stroke="#605000" stroke-width=".5"/><path d="M11 5.500 L17.500 10 L11 14.500 L4.500 10 Z" fill="#f01010" stroke="#800000" stroke-width=".6"/><path d="M2 10h2.500M17.500 10h2.500" stroke="#000" stroke-width="1"/><text x="11" y="21" text-anchor="middle" font-family="Liberation Sans,sans-serif" font-size="8" font-weight="bold" fill="#0000c0" textLength="18" lengthAdjust="spacingAndGlyphs">event</text></svg>
<span style="left:68px;top:132.5px;font-size:11px;letter-spacing:-0.3px;letter-spacing:-0.2px">Událostní procedury</span>
<div style="left:33px;top:160px;width:10px;height:1px;background-image:linear-gradient(90deg,#808080 50%,transparent 0);background-size:2px 1px"></div>
<svg style="left:42px;top:148.5px;" width="22" height="23" viewBox="0 0 22 23"><path d="M11 0v2" stroke="#000" stroke-width="1"/><rect x="4" y="2" width="14" height="2.500" fill="#ffe800" stroke="#605000" stroke-width=".5"/><path d="M11 5.500 L17.500 10 L11 14.500 L4.500 10 Z" fill="#f01010" stroke="#800000" stroke-width=".6"/><path d="M2 10h2.500M17.500 10h2.500" stroke="#000" stroke-width="1"/><text x="11" y="21" text-anchor="middle" font-family="Liberation Sans,sans-serif" font-size="8" font-weight="bold" fill="#008000" textLength="15" lengthAdjust="spacingAndGlyphs">user</text></svg>
<span style="left:68px;top:154.5px;font-size:11px;letter-spacing:-0.3px;letter-spacing:-0.2px">Uživatelské procedury</span>
</div>
<div class="dith" style="left:200px;top:583px;width:17px;height:169px;"></div>
<div class="rb2" style="left:200px;top:583px;width:17px;height:16px;"><svg style="left:0;top:0" width="15" height="14"><polygon points="4,8.75 11,8.75 7.5,5.25" fill="#808080"/></svg></div>
<div class="rb2" style="left:200px;top:736px;width:17px;height:16px;"><svg style="left:0;top:0" width="15" height="14"><polygon points="4,5.25 11,5.25 7.5,8.75" fill="#000"/></svg></div>
<div class="rb2" style="left:200px;top:599px;width:17px;height:113px;"></div>
<div class="dith" style="left:14px;top:752px;width:186px;height:17px;"></div>
<div class="rb2" style="left:14px;top:752px;width:16px;height:17px;"><svg style="left:0;top:0" width="14" height="15"><polygon points="8.75,4 8.75,11 5.25,7.5" fill="#808080"/></svg></div>
<div class="rb2" style="left:184px;top:752px;width:16px;height:17px;"><svg style="left:0;top:0" width="14" height="15"><polygon points="5.25,4 5.25,11 8.75,7.5" fill="#000"/></svg></div>
<div class="rb2" style="left:30px;top:752px;width:122px;height:17px;"></div>
<div style="left:200px;top:752px;width:17px;height:17px;background:#f0f0f0"></div>
<div style="left:13px;top:88px;width:205px;height:1px;background:#696969"></div>

<!-- p_alarm -->
<div style="left:230px;top:92px;width:654px;height:516px;background:#f0f0f0;border:1px solid;border-color:#fff #696969 #696969 #fff;box-shadow:inset -1px -1px 0 #a0a0a0, inset 1px 1px 0 #fff"></div>
<div style="left:237px;top:99px;width:640px;height:22px;background:linear-gradient(90deg,rgb(191,205,219),rgb(215,228,242))"></div>
<svg style="left:245px;top:103px;" width="20" height="15" viewBox="0 0 20 15"><text x="1.500" y="11.500" font-family="Liberation Sans,sans-serif" font-size="11.500" font-weight="bold" stroke="#000" stroke-width="2.200" stroke-linejoin="round" paint-order="stroke" fill="#00e800">C</text><text x="7.500" y="11.500" font-family="Liberation Sans,sans-serif" font-size="11.500" font-weight="bold" stroke="#000" stroke-width="2.200" stroke-linejoin="round" paint-order="stroke" fill="#00ffff" textLength="10" lengthAdjust="spacingAndGlyphs">W</text></svg>
<span class="ui" style="left:281px;top:104px;">Alarm</span>
<div class="rb2" style="left:772px;top:101px;width:33px;height:18px;"><svg style="left:0px;top:0px;" width="31" height="16" viewBox="0 0 31 16"><rect x="3" y="12" width="23" height="2" fill="#000"/></svg>
</div>
<div class="rb2" style="left:806px;top:101px;width:33px;height:18px;"><svg style="left:0px;top:0px;" width="31" height="16" viewBox="0 0 31 16"><rect x="3.5" y="2.5" width="24" height="10" fill="none" stroke="#606060"/><rect x="3" y="2" width="25" height="2" fill="#606060"/></svg>
</div>
<div class="rb2" style="left:840px;top:101px;width:33px;height:18px;"><svg style="left:0px;top:0px;" width="31" height="16" viewBox="0 0 31 16"><path d="M4 3 L27 13 M4 13 L27 3" stroke="#606060" stroke-width="1" fill="none"/></svg>
</div>
<div style="left:237px;top:121px;width:640px;height:480px;background:#c0c0c0"></div>
<svg style="left:237px;top:121px;" width="640" height="480" viewBox="237 121 640 480"><defs><pattern id="hd" width="2" height="2" patternUnits="userSpaceOnUse"><rect width="2" height="2" fill="#300000"/><rect width="1" height="1" fill="#ff0000"/><rect x="1" y="1" width="1" height="1" fill="#ff0000"/></pattern></defs><path d="M321.5 173.5 L362.5 173.5" stroke="#000" stroke-width="1" fill="none"/><path d="M367.5 173.5 L406.5 173.5" stroke="#000" stroke-width="1" fill="none"/><path d="M411.5 173.5 L452.5 173.5" stroke="#000" stroke-width="1" fill="none"/><path d="M457.5 173.5 L496.5 173.5" stroke="#000" stroke-width="1" fill="none"/><path d="M501.5 173.5 L658.5 173.5" stroke="#000" stroke-width="1" fill="none"/><path d="M321.5 185.5 L362.5 185.5" stroke="#000" stroke-width="1" fill="none"/><path d="M367.5 185.5 L380.5 185.5" stroke="#000" stroke-width="1" fill="none"/><path d="M392.5 185.5 L406.5 185.5" stroke="#000" stroke-width="1" fill="none"/><path d="M411.5 185.5 L452.5 185.5" stroke="#000" stroke-width="1" fill="none"/><path d="M457.5 185.5 L470.5 185.5" stroke="#000" stroke-width="1" fill="none"/><path d="M482.5 185.5 L496.5 185.5" stroke="#000" stroke-width="1" fill="none"/><path d="M501.5 185.5 L658.5 185.5" stroke="#000" stroke-width="1" fill="none"/><path d="M380.5 199 V185.5 M392.5 199 V185.5" stroke="#000" stroke-width="1" fill="none"/><path d="M380.5 185.5 Q381 180 386.5 180 Q392 180 392.5 185.5" stroke="#000" stroke-width="1" fill="none"/><path d="M470.5 199 V185.5 M482.5 199 V185.5" stroke="#000" stroke-width="1" fill="none"/><path d="M470.5 185.5 Q471 180 476.5 180 Q482 180 482.5 185.5" stroke="#000" stroke-width="1" fill="none"/><rect x="316.5" y="167.5" width="5" height="24" rx="2.5" fill="#c8c8c8" stroke="#000" stroke-width="1"/><rect x="362.5" y="167.5" width="5" height="24" rx="2.5" fill="#c8c8c8" stroke="#000" stroke-width="1"/><rect x="406.5" y="167.5" width="5" height="24" rx="2.5" fill="#c8c8c8" stroke="#000" stroke-width="1"/><rect x="452.5" y="167.5" width="5" height="24" rx="2.5" fill="#c8c8c8" stroke="#000" stroke-width="1"/><rect x="496.5" y="167.5" width="5" height="24" rx="2.5" fill="#c8c8c8" stroke="#000" stroke-width="1"/><rect x="658.5" y="166.5" width="5" height="24" rx="2.5" fill="#c8c8c8" stroke="#000" stroke-width="1"/><path d="M316.5 174 A25 25.5 0 0 0 291.5 199.5" stroke="#000" stroke-width="1" fill="none"/><path d="M316.5 186.5 A12 12.5 0 0 0 304.5 199.5" stroke="#000" stroke-width="1" fill="none"/><rect x="284.5" y="199.5" width="24" height="5" rx="2.5" fill="#c8c8c8" stroke="#000" stroke-width="1"/><path d="M290 205.5 L303 205.5 L296.5 215 Z M290 224.5 L303 224.5 L296.5 215 Z" fill="#ff0000"/><path d="M289.5 205.5 L303.5 205.5" stroke="#000" stroke-width="1" fill="none"/><path d="M289.5 250.5 V224.5 H303.5 V250.5" stroke="#000" stroke-width="1" fill="#c0c0c0"/><path d="M256.5 290.5 A40 40 0 0 1 336.5 290.5 L336.5 346 A40 40 0 0 1 256.5 346 Z" fill="#7189bd" stroke="#000090" stroke-width="1"/><path d="M277 228 L282 228 Q285 236 286.5 248 L272 248 Z" fill="#800000"/><path d="M277 228 L279 228 L275 248 L272 248 Z" fill="#e00000"/><path d="M289.5 386 V413.5 M303.5 386 V413.5" stroke="#000" stroke-width="1" fill="none"/><path d="M290 414 L303 414 L296.5 423.5 Z M290 433 L303 433 L296.5 423.5 Z" fill="#ff0000"/><path d="M289.5 414 L303.5 414" stroke="#000" stroke-width="1" fill="none"/><rect x="284.5" y="433.5" width="24" height="5" rx="2.5" fill="#c8c8c8" stroke="#000" stroke-width="1"/><rect x="374.5" y="199.5" width="24" height="5" rx="2.5" fill="#c8c8c8" stroke="#000" stroke-width="1"/><path d="M380 205.5 L393 205.5 L386.5 215 Z M380 224.5 L393 224.5 L386.5 215 Z" fill="#ff0000"/><path d="M379.5 205.5 L393.5 205.5" stroke="#000" stroke-width="1" fill="none"/><path d="M379.5 250.5 V224.5 H393.5 V250.5" stroke="#000" stroke-width="1" fill="#c0c0c0"/><path d="M346.5 290.5 A40 40 0 0 1 426.5 290.5 L426.5 346 A40 40 0 0 1 346.5 346 Z" fill="#7189bd" stroke="#000090" stroke-width="1"/><path d="M367 228 L372 228 Q375 236 376.5 248 L362 248 Z" fill="#800000"/><path d="M367 228 L369 228 L365 248 L362 248 Z" fill="#e00000"/><path d="M379.5 386 V413.5 M393.5 386 V413.5" stroke="#000" stroke-width="1" fill="none"/><path d="M380 414 L393 414 L386.5 423.5 Z M380 433 L393 433 L386.5 423.5 Z" fill="#ff0000"/><path d="M379.5 414 L393.5 414" stroke="#000" stroke-width="1" fill="none"/><rect x="374.5" y="433.5" width="24" height="5" rx="2.5" fill="#c8c8c8" stroke="#000" stroke-width="1"/><rect x="464.5" y="199.5" width="24" height="5" rx="2.5" fill="#c8c8c8" stroke="#000" stroke-width="1"/><path d="M470 205.5 L483 205.5 L476.5 215 Z M470 224.5 L483 224.5 L476.5 215 Z" fill="#ff0000"/><path d="M469.5 205.5 L483.5 205.5" stroke="#000" stroke-width="1" fill="none"/><path d="M469.5 250.5 V224.5 H483.5 V250.5" stroke="#000" stroke-width="1" fill="#c0c0c0"/><path d="M436.5 290.5 A40 40 0 0 1 516.5 290.5 L516.5 346 A40 40 0 0 1 436.5 346 Z" fill="#7189bd" stroke="#000090" stroke-width="1"/><path d="M457 228 L462 228 Q465 236 466.5 248 L452 248 Z" fill="#800000"/><path d="M457 228 L459 228 L455 248 L452 248 Z" fill="#e00000"/><path d="M469.5 386 V413.5 M483.5 386 V413.5" stroke="#000" stroke-width="1" fill="none"/><path d="M470 414 L483 414 L476.5 423.5 Z M470 433 L483 433 L476.5 423.5 Z" fill="#ff0000"/><path d="M469.5 414 L483.5 414" stroke="#000" stroke-width="1" fill="none"/><rect x="464.5" y="433.5" width="24" height="5" rx="2.5" fill="#c8c8c8" stroke="#000" stroke-width="1"/><rect x="270.5" y="270.5" width="51" height="14" fill="#c0c0c0" stroke="#000" stroke-width="1"/><text x="296" y="281.9" text-anchor="middle" font-family="Liberation Sans,sans-serif" font-size="12.3" font-weight="bold" letter-spacing="0.4">Tank 1</text><rect x="360.5" y="269.5" width="51" height="14" fill="#c0c0c0" stroke="#000" stroke-width="1"/><text x="386" y="280.9" text-anchor="middle" font-family="Liberation Sans,sans-serif" font-size="12.3" font-weight="bold" letter-spacing="0.4">Tank 2</text><rect x="451" y="270.5" width="51" height="14" fill="#c0c0c0" stroke="#000" stroke-width="1"/><text x="476.5" y="281.9" text-anchor="middle" font-family="Liberation Sans,sans-serif" font-size="12.3" font-weight="bold" letter-spacing="0.4">Tank 3</text><path d="M321.5 451.5 L362.5 451.5" stroke="#000" stroke-width="1" fill="none"/><path d="M367.5 451.5 L380.5 451.5" stroke="#000" stroke-width="1" fill="none"/><path d="M392.5 451.5 L406.5 451.5" stroke="#000" stroke-width="1" fill="none"/><path d="M411.5 451.5 L452.5 451.5" stroke="#000" stroke-width="1" fill="none"/><path d="M457.5 451.5 L470 451.5" stroke="#000" stroke-width="1" fill="none"/><path d="M482 451.5 L496.5 451.5" stroke="#000" stroke-width="1" fill="none"/><path d="M501.5 451.5 L717 451.5" stroke="#000" stroke-width="1" fill="none"/><path d="M741 451.5 L835.5 451.5" stroke="#000" stroke-width="1" fill="none"/><path d="M321.5 464.5 L362.5 464.5" stroke="#000" stroke-width="1" fill="none"/><path d="M367.5 464.5 L406.5 464.5" stroke="#000" stroke-width="1" fill="none"/><path d="M411.5 464.5 L452.5 464.5" stroke="#000" stroke-width="1" fill="none"/><path d="M457.5 464.5 L496.5 464.5" stroke="#000" stroke-width="1" fill="none"/><path d="M501.5 464.5 L717 464.5" stroke="#000" stroke-width="1" fill="none"/><path d="M741 464.5 L835.5 464.5" stroke="#000" stroke-width="1" fill="none"/><path d="M380.5 438.5 V452.5 Q381 457.5 386.5 457.5 Q392 457.5 392.5 452.5 V438.5" stroke="#000" stroke-width="1" fill="none"/><path d="M470.5 438.5 V452.5 Q471 457.5 476.5 457.5 Q482 457.5 482.5 452.5 V438.5" stroke="#000" stroke-width="1" fill="none"/><rect x="316.5" y="446.5" width="5" height="23" rx="2.5" fill="#c8c8c8" stroke="#000" stroke-width="1"/><rect x="362.5" y="446.5" width="5" height="23" rx="2.5" fill="#c8c8c8" stroke="#000" stroke-width="1"/><rect x="406.5" y="446.5" width="5" height="23" rx="2.5" fill="#c8c8c8" stroke="#000" stroke-width="1"/><rect x="452.5" y="446.5" width="5" height="23" rx="2.5" fill="#c8c8c8" stroke="#000" stroke-width="1"/><rect x="496.5" y="446.5" width="5" height="23" rx="2.5" fill="#c8c8c8" stroke="#000" stroke-width="1"/><path d="M291.5 438.5 A25 25.500 0 0 0 316.5 464.5" stroke="#000" stroke-width="1" fill="none"/><path d="M304.5 438.5 A12 13 0 0 0 316.5 451.5" stroke="#000" stroke-width="1" fill="none"/><path d="M663.5 173.5 A26 25 0 0 1 689.5 198.5" stroke="#000" stroke-width="1" fill="none"/><path d="M663.5 185.5 A14 13 0 0 1 677.5 198.5" stroke="#000" stroke-width="1" fill="none"/><rect x="670.5" y="198.5" width="24" height="5" rx="2.5" fill="#c8c8c8" stroke="#000" stroke-width="1"/><path d="M677.5 203.5 V403 M689.5 203.5 V403" stroke="#000" stroke-width="1" fill="none"/><rect x="670.5" y="403.5" width="24" height="5" rx="2.5" fill="#c8c8c8" stroke="#000" stroke-width="1"/><path d="M677.5 408.500 A25 26 0 0 0 702.5 434.5" stroke="#000" stroke-width="1" fill="none"/><path d="M689.5 408.500 A13 14 0 0 0 702.5 422.5" stroke="#000" stroke-width="1" fill="none"/><rect x="702.5" y="415.5" width="5" height="24" rx="2.5" fill="#c8c8c8" stroke="#000" stroke-width="1"/><path d="M707.5 422.5 L717 422.5" stroke="#000" stroke-width="1" fill="none"/><path d="M707.5 434.5 L717 434.5" stroke="#000" stroke-width="1" fill="none"/><path d="M741 422.5 L748 422.5" stroke="#000" stroke-width="1" fill="none"/><path d="M741 434.5 L748 434.5" stroke="#000" stroke-width="1" fill="none"/><rect x="748.5" y="415.5" width="5" height="24" rx="2.5" fill="#c8c8c8" stroke="#000" stroke-width="1"/><path d="M753.5 434.5 A26 26 0 0 0 779.5 408.500" stroke="#000" stroke-width="1" fill="none"/><path d="M753.5 422.5 A14 14 0 0 0 767.5 408.500" stroke="#000" stroke-width="1" fill="none"/><rect x="760.5" y="403.5" width="24" height="5" rx="2.5" fill="#c8c8c8" stroke="#000" stroke-width="1"/><path d="M767.5 403 V388 M779.5 403 V388" stroke="#000" stroke-width="1" fill="none"/><path d="M702.5 287.5 A70 70 0 0 1 842.5 287.5 L842.5 319.5 A70 70 0 0 1 702.5 319.5 Z" fill="#7189bd" stroke="#000090" stroke-width="1"/><path d="M767.5 217.5 V203.5 M779.5 217.5 V203.5" stroke="#000" stroke-width="1" fill="none"/><rect x="761.5" y="198.5" width="24" height="5" rx="2.5" fill="#c8c8c8" stroke="#000" stroke-width="1"/><path d="M767.5 198.5 A26 25 0 0 1 793.5 173.5" stroke="#000" stroke-width="1" fill="none"/><path d="M779.5 198.5 A14 13 0 0 1 793.5 185.5" stroke="#000" stroke-width="1" fill="none"/><rect x="793.5" y="166.5" width="5" height="24" rx="2.5" fill="#c8c8c8" stroke="#000" stroke-width="1"/><path d="M798.5 173.5 L833 173.5" stroke="#000" stroke-width="1" fill="none"/><path d="M798.5 185.5 L833 185.5" stroke="#000" stroke-width="1" fill="none"/><rect x="833.5" y="166.5" width="5" height="24" rx="2.5" fill="#c8c8c8" stroke="#000" stroke-width="1"/><path d="M838 173.5 A26.5 26 0 0 1 864.5 199.5" stroke="#000" stroke-width="1" fill="none"/><path d="M838 185.5 A14.5 14 0 0 1 852.5 199.5" stroke="#000" stroke-width="1" fill="none"/><rect x="845.5" y="199.5" width="24" height="5" rx="2.5" fill="#c8c8c8" stroke="#000" stroke-width="1"/><path d="M852.5 204.5 V433 M864.5 204.5 V433" stroke="#000" stroke-width="1" fill="none"/><rect x="845.5" y="433.5" width="24" height="5" rx="2.5" fill="#c8c8c8" stroke="#000" stroke-width="1"/><path d="M864.5 438 A26 26.5 0 0 1 838.5 464.5" stroke="#000" stroke-width="1" fill="none"/><path d="M852.5 438 A14 13.5 0 0 1 838.5 451.5" stroke="#000" stroke-width="1" fill="none"/><rect x="833.5" y="445.5" width="5" height="23" rx="2.5" fill="#c8c8c8" stroke="#000" stroke-width="1"/><circle cx="728.6" cy="429.4" r="12.3" fill="#fff" stroke="#0000e0" stroke-width="1"/><path d="M728.6 429.4 L728.6 417.1 A12.3 12.3 0 0 1 740.9 429.4 Z" fill="#0000ff"/><path d="M728.6 429.4 L728.6 441.7 A12.3 12.3 0 0 1 716.3 429.4 Z" fill="#0000ff"/><circle cx="729.6" cy="458.4" r="12.3" fill="#fff" stroke="#0000e0" stroke-width="1"/><path d="M729.6 458.4 L729.6 446.1 A12.3 12.3 0 0 1 741.9 458.4 Z" fill="#0000ff"/><path d="M729.6 458.4 L729.6 470.7 A12.3 12.3 0 0 1 717.3 458.4 Z" fill="#0000ff"/><rect x="543" y="218" width="14" height="14" fill="#c0c0c0"/><path d="M543 232 v-14 h14 l-2 2 h-10 v10z" fill="#fff"/><path d="M543 232 h14 v-14 l-2 2 v10 h-10z" fill="#808080"/><rect x="543" y="236" width="14" height="14" fill="#c0c0c0"/><path d="M543 250 v-14 h14 l-2 2 h-10 v10z" fill="#fff"/><path d="M543 250 h14 v-14 l-2 2 v10 h-10z" fill="#808080"/><rect x="543" y="254" width="14" height="14" fill="#c0c0c0"/><path d="M543 268 v-14 h14 l-2 2 h-10 v10z" fill="#fff"/><path d="M543 268 h14 v-14 l-2 2 v10 h-10z" fill="#808080"/><rect x="543" y="308" width="14" height="14" fill="#c0c0c0"/><path d="M543 322 v-14 h14 l-2 2 h-10 v10z" fill="#fff"/><path d="M543 322 h14 v-14 l-2 2 v10 h-10z" fill="#808080"/><rect x="543" y="326" width="14" height="14" fill="#c0c0c0"/><path d="M543 340 v-14 h14 l-2 2 h-10 v10z" fill="#fff"/><path d="M543 340 h14 v-14 l-2 2 v10 h-10z" fill="#808080"/><rect x="543" y="344" width="14" height="14" fill="#c0c0c0"/><path d="M543 358 v-14 h14 l-2 2 h-10 v10z" fill="#fff"/><path d="M543 358 h14 v-14 l-2 2 v10 h-10z" fill="#808080"/><rect x="537.5" y="305.5" width="70" height="55" fill="none" stroke="#900000"/><rect x="534" y="302" width="7" height="7" fill="url(#hd)"/><rect x="569" y="302" width="7" height="7" fill="url(#hd)"/><rect x="604" y="302" width="7" height="7" fill="url(#hd)"/><rect x="534" y="329" width="7" height="7" fill="url(#hd)"/><rect x="569" y="329" width="7" height="7" fill="url(#hd)"/><rect x="604" y="329" width="7" height="7" fill="url(#hd)"/><rect x="534" y="357" width="7" height="7" fill="url(#hd)"/><rect x="569" y="357" width="7" height="7" fill="url(#hd)"/><rect x="604" y="357" width="7" height="7" fill="url(#hd)"/></svg>
<span style="left:438.5px;top:122.7px;font-family:'Liberation Serif',serif;font-style:italic;font-weight:bold;font-size:32px;color:#fff;text-shadow:-1px -1px 0 #000,-1.6px -1px 0 #000;letter-spacing:-0.28px">Alarm instrument</span>
<span style="left:539px;top:201px;font-size:12px;font-weight:bold;letter-spacing:-0.1px">Input control</span>
<span style="left:539px;top:291px;font-size:12px;font-weight:bold;letter-spacing:-0.1px">Output control</span>
<span style="left:562px;top:219px;font-size:12px;letter-spacing:-0.3px">Tank 1</span>
<span style="left:562px;top:237px;font-size:12px;letter-spacing:-0.3px">Tank 2</span>
<span style="left:562px;top:255px;font-size:12px;letter-spacing:-0.3px">Tank 3</span>
<span style="left:562px;top:309px;font-size:12px;letter-spacing:-0.3px">Tank 1</span>
<span style="left:562px;top:327px;font-size:12px;letter-spacing:-0.3px">Tank 2</span>
<span style="left:562px;top:345px;font-size:12px;letter-spacing:-0.3px">Tank 3</span>
<div style="left:537px;top:397px;width:110px;height:39px;background:#c0c0c0;border:1px solid;border-color:#fff #696969 #696969 #fff;box-shadow:inset -1px -1px 0 #808080"></div>
<span class="ui" style="left:556px;top:411px;letter-spacing:0.1px">OCL methods</span>
<div class="dith2" style="left:341px;top:486px;width:28px;height:27px;border:1px solid;border-color:#808080 #fff #fff #808080"><svg style="left:0px;top:0px;" width="26" height="25" viewBox="0 0 26 25"><g transform="translate(1.5,2) rotate(42 14 13) scale(0.88) translate(1.5,1)"><path d="M14 3.5 Q16.5 3.5 17 8 L18.5 15 Q20 16.5 20 18 H8 Q8 16.5 9.5 15 L11 8 Q11.5 3.5 14 3.5Z" fill="#ff0000"/><path d="M15.5 4.5 Q17 6 17.3 9 L18.8 15.5 Q20 16.8 20 18 H17 Q17 12 15.5 4.5Z" fill="#a00000"/><path d="M10.2 13.5 H18.3" stroke="#e8e8e8" stroke-width="1"/><circle cx="14" cy="20.5" r="1.8" fill="#a00000"/></g><path d="M5 13 l4 4 M5 16 l3.500 3.500 M7 20 l2 2" stroke="#000" stroke-width="1" stroke-dasharray="1.5 1"/></svg>
</div>
<div class="dith2" style="left:369.3px;top:486px;width:28px;height:27px;border:1px solid;border-color:#808080 #fff #fff #808080"><svg style="left:0px;top:0px;" width="26" height="25" viewBox="0 0 26 25"><g transform="translate(1.5,2) rotate(42 14 13) scale(0.88) translate(1.5,1)"><path d="M14 3.5 Q16.5 3.5 17 8 L18.5 15 Q20 16.5 20 18 H8 Q8 16.5 9.5 15 L11 8 Q11.5 3.5 14 3.5Z" fill="#ff0000"/><path d="M15.5 4.5 Q17 6 17.3 9 L18.8 15.5 Q20 16.8 20 18 H17 Q17 12 15.5 4.5Z" fill="#a00000"/><path d="M10.2 13.5 H18.3" stroke="#e8e8e8" stroke-width="1"/><circle cx="14" cy="20.5" r="1.8" fill="#a00000"/></g><path d="M5 13 l4 4 M5 16 l3.500 3.500 M7 20 l2 2" stroke="#000" stroke-width="1" stroke-dasharray="1.5 1"/><path d="M4 5 L6.5 8.5 L10 2" stroke="#d00000" stroke-width="1.3" fill="none"/></svg>
</div>
<div class="dith2" style="left:397.6px;top:486px;width:28px;height:27px;border:1px solid;border-color:#808080 #fff #fff #808080"><svg style="left:0px;top:0px;" width="26" height="25" viewBox="0 0 26 25"><g transform="translate(1.5,2) rotate(42 14 13) scale(0.88) translate(1.5,1)"><path d="M14 3.5 Q16.5 3.5 17 8 L18.5 15 Q20 16.5 20 18 H8 Q8 16.5 9.5 15 L11 8 Q11.5 3.5 14 3.5Z" fill="#00e800"/><path d="M15.5 4.5 Q17 6 17.3 9 L18.8 15.5 Q20 16.8 20 18 H17 Q17 12 15.5 4.5Z" fill="#008000"/><path d="M10.2 13.5 H18.3" stroke="#e8e8e8" stroke-width="1"/><circle cx="14" cy="20.5" r="1.8" fill="#008000"/></g></svg>
</div>
<div class="dith2" style="left:425.9px;top:486px;width:28px;height:27px;border:1px solid;border-color:#808080 #fff #fff #808080"><svg style="left:0px;top:0px;" width="26" height="25" viewBox="0 0 26 25"><g transform="translate(1.5,2) rotate(42 14 13) scale(0.88) translate(1.5,1)"><path d="M14 3.5 Q16.5 3.5 17 8 L18.5 15 Q20 16.5 20 18 H8 Q8 16.5 9.5 15 L11 8 Q11.5 3.5 14 3.5Z" fill="#00e800"/><path d="M15.5 4.5 Q17 6 17.3 9 L18.8 15.5 Q20 16.8 20 18 H17 Q17 12 15.5 4.5Z" fill="#008000"/><path d="M10.2 13.5 H18.3" stroke="#e8e8e8" stroke-width="1"/><circle cx="14" cy="20.5" r="1.8" fill="#008000"/></g><path d="M4 5 L6.5 8.5 L10 2" stroke="#d00000" stroke-width="1.3" fill="none"/></svg>
</div>
<svg style="left:262px;top:492px;" width="19" height="15" viewBox="0 0 19 15"><path d="M2.5 2.5 L4 0.5 H8 L9.5 2.5 H16.5 V5 H3Z" fill="#e8e8a0" stroke="#808080"/><path d="M0.5 4.5 H14.5 L17.5 3.5 V12.5 L16 14.5 H2.5 Z" fill="#ffff60" stroke="#808080"/><path d="M15.5 5 L17.5 4 V12.5 L15.5 14" fill="#808060" stroke="#404040" stroke-width=".6"/></svg>
<svg style="left:290px;top:491px;" width="18" height="18" viewBox="0 0 18 18"><rect x="3.5" y="0.5" width="13" height="15" fill="#fff" stroke="#000"/><rect x="0.5" y="2.5" width="13" height="15" fill="#fff" stroke="#000"/><g transform="rotate(30 8 10)"><path d="M8 4 Q10 4 10.3 7 L11.5 12 H4.5 L5.7 7 Q6 4 8 4Z" fill="#f0d000" stroke="#806000" stroke-width=".5"/><circle cx="8" cy="13.5" r="1.2" fill="#806000"/></g></svg>
<svg style="left:318px;top:491px;" width="18" height="18" viewBox="0 0 18 18"><rect x="3.5" y="0.5" width="13" height="15" fill="#fff" stroke="#000"/><rect x="0.5" y="2.5" width="13" height="15" fill="#fff" stroke="#000"/><g transform="rotate(30 8 10)"><path d="M8 4 Q10 4 10.3 7 L11.5 12 H4.5 L5.7 7 Q6 4 8 4Z" fill="#f0d000" stroke="#806000" stroke-width=".5"/><circle cx="8" cy="13.5" r="1.2" fill="#806000"/></g><path d="M1 3 L14 17" stroke="#e00000" stroke-width="1.6"/></svg>
<div style="left:454px;top:486px;width:38px;height:27px;background:#c0c0c0;border:1px solid;border-color:#808080 #fff #fff #808080"></div>
<span style="left:472px;top:495px;font-size:12px">0</span>
<div style="left:493px;top:486px;width:364px;height:27px;background:#c0c0c0;border:1px solid;border-color:#808080 #fff #fff #808080"></div>
<div style="left:258px;top:515px;width:599px;height:63px;background:#fff;border:1px solid;border-color:#808080 #fff #fff #808080"></div>
<div style="left:259px;top:517px;width:597px;height:14px;border:1px solid #f00000"></div>
<span style="left:282px;top:518px;font-size:11px;letter-spacing:-0.22px;color:#f80000">Aktivní alarm</span>
<span style="left:282px;top:533px;font-size:11px;letter-spacing:-0.22px;color:#f80000">Aktivní potvrzený alarm</span>
<span style="left:282px;top:548px;font-size:11px;letter-spacing:-0.22px;">Neaktivní alarm</span>
<span style="left:282px;top:563px;font-size:11px;letter-spacing:-0.22px;">Neaktivní potvrzený alarm</span>
<svg style="left:264px;top:532px;" width="13" height="13" viewBox="0 0 13 13"><rect x="0.5" y="0.5" width="12" height="12" fill="#fff" stroke="#000"/><path d="M3 6.5 L5.5 9.5 L10 3" stroke="#a00000" stroke-width="1.6" fill="none"/></svg>
<svg style="left:264px;top:562px;" width="13" height="13" viewBox="0 0 13 13"><rect x="0.5" y="0.5" width="12" height="12" fill="#fff" stroke="#000"/><path d="M3 6.5 L5.5 9.5 L10 3" stroke="#a00000" stroke-width="1.6" fill="none"/></svg>

<!-- p_paleta -->
<div style="left:888px;top:97px;width:348px;height:656px;background:#f0f0f0;border:1px solid;border-color:#fff #696969 #696969 #fff;box-shadow:inset -1px -1px 0 #a0a0a0, inset 1px 1px 0 #fff"></div>
<div style="left:896px;top:105px;width:332px;height:22px;background:linear-gradient(90deg,rgb(191,205,219),rgb(215,228,242))"></div>
<svg style="left:907px;top:108.5px;" width="16" height="15" viewBox="0 0 16 15"><rect x="0.500" y="0.500" width="13" height="9" fill="#000080" stroke="#000"/><path d="M1.500 8.500 L3.500 3 L5 5 L7 3 L8.500 5 L10.500 3 L12 4.500" stroke="#00ffff" fill="none" stroke-width="1.100"/><rect x="3.500" y="5.500" width="11" height="8" fill="#fff" stroke="#000"/><path d="M3 14 h12" stroke="#000" stroke-width="1"/><path d="M5 8.500 l3 -1" stroke="#808080"/><path d="M8 13 L10 9.500 L10.500 8" stroke="#000" stroke-width="1" fill="none"/><rect x="9" y="7" width="1.300" height="1.300" fill="#ff0000"/><rect x="11" y="8" width="1.300" height="1.300" fill="#ff0000"/></svg>
<span class="ui" style="left:940px;top:110px;">Paleta přístrojů</span>
<div class="rb2" style="left:1122px;top:107px;width:33px;height:18px;"><svg style="left:0px;top:0px;" width="31" height="16" viewBox="0 0 31 16"><rect x="3" y="12" width="23" height="2" fill="#000"/></svg>
</div>
<div class="rb2" style="left:1157px;top:107px;width:33px;height:18px;"><svg style="left:0px;top:0px;" width="31" height="16" viewBox="0 0 31 16"><rect x="3.5" y="2.5" width="24" height="10" fill="none" stroke="#000"/><rect x="3" y="2" width="25" height="2" fill="#000"/></svg>
</div>
<div class="rb2" style="left:1192px;top:107px;width:33px;height:18px;"><svg style="left:0px;top:0px;" width="31" height="16" viewBox="0 0 31 16"><path d="M4 3 L27 13 M4 13 L27 3" stroke="#000" stroke-width="1" fill="none"/></svg>
</div>
<svg style="left:900px;top:133px;" width="22" height="17" viewBox="0 0 22 17"><rect x="2" y="8.5" width="6.500" height="7.500" fill="#707070"/><rect x="1" y="7.5" width="6.500" height="7.500" fill="#20e0f0"/><rect x="2.2" y="8.7" width="4" height="3.500" fill="#b8ffff"/><rect x="1" y="7.5" width="6.500" height="7.500" fill="none" stroke="#e8ffff" stroke-width=".6"/><rect x="14" y="8.5" width="6.500" height="7.500" fill="#707070"/><rect x="13" y="7.5" width="6.500" height="7.500" fill="#20e0f0"/><rect x="14.2" y="8.7" width="4" height="3.500" fill="#b8ffff"/><rect x="13" y="7.5" width="6.500" height="7.500" fill="none" stroke="#e8ffff" stroke-width=".6"/><path d="M3.5 3 h5" stroke="#a80000" stroke-width="1.200"/><path d="M1 3 l3 -2.800 v5.600z" fill="#a80000"/><path d="M13 3 h5" stroke="#a80000" stroke-width="1.200"/><path d="M20.5 3 l-3 -2.800 v5.600z" fill="#a80000"/></svg>
<svg style="left:926px;top:133px;" width="22" height="17" viewBox="0 0 22 17"><rect x="2" y="8.5" width="6.500" height="7.500" fill="#707070"/><rect x="1" y="7.5" width="6.500" height="7.500" fill="#20e0f0"/><rect x="2.2" y="8.7" width="4" height="3.500" fill="#b8ffff"/><rect x="1" y="7.5" width="6.500" height="7.500" fill="none" stroke="#e8ffff" stroke-width=".6"/><rect x="14" y="8.5" width="6.500" height="7.500" fill="#707070"/><rect x="13" y="7.5" width="6.500" height="7.500" fill="#20e0f0"/><rect x="14.2" y="8.7" width="4" height="3.500" fill="#b8ffff"/><rect x="13" y="7.5" width="6.500" height="7.500" fill="none" stroke="#e8ffff" stroke-width=".6"/><path d="M1 3 h5" stroke="#a80000" stroke-width="1.200"/><path d="M8.5 3 l-3 -2.800 v5.600z" fill="#a80000"/><path d="M15.5 3 h5" stroke="#a80000" stroke-width="1.200"/><path d="M13 3 l3 -2.800 v5.600z" fill="#a80000"/></svg>
<svg style="left:962px;top:131px;" width="16" height="20" viewBox="0 0 16 20"><rect x="1" y="1.5" width="6.500" height="7.500" fill="#707070"/><rect x="0" y="0.5" width="6.500" height="7.500" fill="#20e0f0"/><rect x="1.2" y="1.7" width="4" height="3.500" fill="#b8ffff"/><rect x="0" y="0.5" width="6.500" height="7.500" fill="none" stroke="#e8ffff" stroke-width=".6"/><rect x="1" y="12" width="6.500" height="7.500" fill="#707070"/><rect x="0" y="11" width="6.500" height="7.500" fill="#20e0f0"/><rect x="1.2" y="12.2" width="4" height="3.500" fill="#b8ffff"/><rect x="0" y="11" width="6.500" height="7.500" fill="none" stroke="#e8ffff" stroke-width=".6"/><path d="M11.5 2.5 v5" stroke="#a80000" stroke-width="1.200"/><path d="M11.5 0 l-2.800 3 h5.600z" fill="#a80000"/><path d="M11.5 11 v5" stroke="#a80000" stroke-width="1.200"/><path d="M11.5 18.5 l-2.800 -3 h5.600z" fill="#a80000"/></svg>
<svg style="left:990px;top:131px;" width="16" height="20" viewBox="0 0 16 20"><rect x="1" y="1.5" width="6.500" height="7.500" fill="#707070"/><rect x="0" y="0.5" width="6.500" height="7.500" fill="#20e0f0"/><rect x="1.2" y="1.7" width="4" height="3.500" fill="#b8ffff"/><rect x="0" y="0.5" width="6.500" height="7.500" fill="none" stroke="#e8ffff" stroke-width=".6"/><rect x="1" y="12" width="6.500" height="7.500" fill="#707070"/><rect x="0" y="11" width="6.500" height="7.500" fill="#20e0f0"/><rect x="1.2" y="12.2" width="4" height="3.500" fill="#b8ffff"/><rect x="0" y="11" width="6.500" height="7.500" fill="none" stroke="#e8ffff" stroke-width=".6"/><path d="M11.5 0 v5" stroke="#a80000" stroke-width="1.200"/><path d="M11.5 7.5 l-2.800 -3 h5.600z" fill="#a80000"/><path d="M11.5 13.5 v5" stroke="#a80000" stroke-width="1.200"/><path d="M11.5 11 l-2.800 3 h5.600z" fill="#a80000"/></svg>
<svg style="left:1020px;top:131px;" width="21" height="20" viewBox="0 0 21 20"><circle cx="11" cy="7" r="5.500" fill="#b0b0b0" stroke="#000" stroke-width="1.500"/><path d="M7.500 3 L15 10" stroke="#000" stroke-width="2.200"/><path d="M8.500 3 L16 10" stroke="#fff" stroke-width=".8"/><text x="0" y="19" font-family="Liberation Sans,sans-serif" font-size="7" fill="#000">20</text><text x="12" y="19" font-family="Liberation Sans,sans-serif" font-size="7" fill="#000">40</text></svg>
<span style="left:1047px;top:126px;font-family:'Liberation Serif',serif;font-size:28px;line-height:1">A</span>
<div style="left:896px;top:154px;width:332px;height:1px;background:#a0a0a0"></div>
<div style="left:896px;top:155px;width:332px;height:1px;background:#fff"></div>
<div style="left:953px;top:130px;width:1px;height:22px;background:#a0a0a0"></div>
<div style="left:954px;top:130px;width:1px;height:22px;background:#fff"></div>
<div style="left:1013px;top:130px;width:1px;height:22px;background:#a0a0a0"></div>
<div style="left:1014px;top:130px;width:1px;height:22px;background:#fff"></div>
<span style="left:890px;top:209px;width:80px;text-align:center;font-size:11px;letter-spacing:-0.15px;">sequencer</span>
<svg style="left:908px;top:159px;" width="46" height="48" viewBox="-2 -4 46 48"><g transform="translate(3,0)"><path d="M16.5 6 V39.5" stroke="#000"/><path d="M17.5 7 V40" stroke="#909090"/><rect x="6" y="14" width="24" height="8" fill="#808080"/><rect x="6" y="29" width="24" height="8" fill="#808080"/><rect x="4.5" y="12.5" width="24" height="8" fill="#fff" stroke="#000"/><rect x="4.5" y="27.5" width="24" height="8" fill="#fff" stroke="#000"/><path d="M14 24.5 H19 L16.5 27Z" fill="#000"/><g transform="translate(23.5,0.5)"><path d="M4.5 1 H8.5 L12 13 V15.5 H2.5 V13Z" fill="#808080" transform="translate(1,1)"/><path d="M4 0.5 H7.5 L11 12 V14.5 H0.5 V12Z" fill="#008080" stroke="#001818" stroke-width=".8"/><path d="M4.700 1.800 H6.900 L8.200 9.500 H3.300Z" fill="#f0f0d8"/><path d="M6 10 L3.2 1.5" stroke="#000" stroke-width=".8"/><path d="M5.8 2 V10" stroke="#c0a000" stroke-width=".7"/><path d="M1.2 12.2 H10.4" stroke="#00c0c0" stroke-width=".8"/><rect x="0" y="2" width="1" height="1" fill="#000"/></g></g></svg>
<span style="left:949px;top:209px;width:80px;text-align:center;font-size:11px;letter-spacing:-0.15px;">selector</span>
<svg style="left:967px;top:159px;" width="46" height="48" viewBox="-2 -4 46 48"><g transform="translate(0,0)"><path d="M19.5 6 V15" stroke="#000"/><path d="M20.5 6 V15" stroke="#909090"/><path d="M7 25 L20.5 16.5 L34 25 L20.5 33.5Z" fill="#808080"/><path d="M6 23.5 L19.5 15 L33 23.5 L19.5 32Z" fill="#fff" stroke="#000"/><path d="M6 23.5 H3.5 V33" stroke="#000" fill="none"/><path d="M33 23.5 H35.5 V33" stroke="#000" fill="none"/><path d="M1 31 H6 L3.5 35Z M33 31 H38 L35.5 35Z" fill="#000"/><path d="M4.5 24.5 V32 M36.5 24.5 V32" stroke="#909090"/><text x="19.5" y="27.5" text-anchor="middle" font-family="Liberation Sans,sans-serif" font-size="9" font-weight="bold" fill="#000">?</text><g transform="translate(25.5,0.5)"><path d="M4.5 1 H8.5 L12 13 V15.5 H2.5 V13Z" fill="#808080" transform="translate(1,1)"/><path d="M4 0.5 H7.5 L11 12 V14.5 H0.5 V12Z" fill="#008080" stroke="#001818" stroke-width=".8"/><path d="M4.700 1.800 H6.900 L8.200 9.500 H3.300Z" fill="#f0f0d8"/><path d="M6 10 L3.2 1.5" stroke="#000" stroke-width=".8"/><path d="M5.8 2 V10" stroke="#c0a000" stroke-width=".7"/><path d="M1.2 12.2 H10.4" stroke="#00c0c0" stroke-width=".8"/><rect x="0" y="2" width="1" height="1" fill="#000"/></g></g></svg>
<span style="left:890px;top:271px;width:80px;text-align:center;font-size:11px;letter-spacing:-0.15px;">iterator</span>
<svg style="left:908px;top:221px;" width="46" height="48" viewBox="-2 -4 46 48"><g transform="translate(3,0)"><path d="M16.5 5 V38.5" stroke="#000"/><path d="M17.5 6 V39" stroke="#909090"/><rect x="7.5" y="13" width="23" height="8.5" rx="4" fill="#808080"/><rect x="7.5" y="28" width="23" height="8.5" rx="4" fill="#808080"/><rect x="6" y="11.500" width="23" height="8" rx="4" fill="#fff" stroke="#000"/><rect x="6" y="26.5" width="23" height="8" rx="4" fill="#fff" stroke="#000"/><path d="M6 30.5 H-0.5 V15.5 H3" stroke="#000" fill="none"/><path d="M2.5 13 L5.5 15.5 L2.5 18Z" fill="#000"/><path d="M14 23.5 H19 L16.5 26Z" fill="#000"/><text x="16.5" y="21.500" text-anchor="middle" font-family="Liberation Sans,sans-serif" font-size="11" fill="#000">*</text><g transform="translate(23.5,-0.5)"><path d="M4.5 1 H8.5 L12 13 V15.5 H2.5 V13Z" fill="#808080" transform="translate(1,1)"/><path d="M4 0.5 H7.5 L11 12 V14.5 H0.5 V12Z" fill="#008080" stroke="#001818" stroke-width=".8"/><path d="M4.700 1.800 H6.900 L8.200 9.500 H3.300Z" fill="#f0f0d8"/><path d="M6 10 L3.2 1.5" stroke="#000" stroke-width=".8"/><path d="M5.8 2 V10" stroke="#c0a000" stroke-width=".7"/><path d="M1.2 12.2 H10.4" stroke="#00c0c0" stroke-width=".8"/><rect x="0" y="2" width="1" height="1" fill="#000"/></g></g></svg>
<span style="left:949px;top:271px;width:80px;text-align:center;font-size:11px;letter-spacing:-0.15px;">panel</span>
<svg style="left:967px;top:221px;" width="46" height="48" viewBox="-2 -4 46 48"><g transform="translate(1,0)"><rect x="0" y="0" width="40" height="39.500" fill="#c0c0c0"/><path d="M0.5 39.5 V0.5 H40" stroke="#000" fill="none"/><path d="M1.5 39 V1.5 H40" stroke="#606060" fill="none"/><rect x="4" y="3" width="15" height="6" fill="#a00000"/><rect x="22" y="3" width="15" height="6" fill="#a00000"/><text x="11.5" y="8.300" text-anchor="middle" font-family="Liberation Mono,monospace" font-size="6" font-weight="bold" fill="#ff3030" textLength="13">74012</text><text x="29.5" y="8.300" text-anchor="middle" font-family="Liberation Mono,monospace" font-size="6" font-weight="bold" fill="#ff3030" textLength="13">03712</text><circle cx="5.5" cy="13" r="1.700" fill="#ff0000" stroke="#000" stroke-width=".5"/><circle cx="5.5" cy="19" r="1.700" fill="#008000" stroke="#000" stroke-width=".5"/><circle cx="11.5" cy="13" r="1.700" fill="#800000" stroke="#000" stroke-width=".5"/><circle cx="11.5" cy="19" r="1.700" fill="#00ff00" stroke="#000" stroke-width=".5"/><circle cx="17.5" cy="13" r="1.700" fill="#e0e0e0" stroke="#000" stroke-width=".5"/><circle cx="17.5" cy="19" r="1.700" fill="#ffff00" stroke="#000" stroke-width=".5"/><circle cx="23.5" cy="13" r="1.700" fill="#e0e0e0" stroke="#000" stroke-width=".5"/><circle cx="23.5" cy="19" r="1.700" fill="#ffff00" stroke="#000" stroke-width=".5"/><circle cx="29.5" cy="13" r="1.700" fill="#ffff00" stroke="#000" stroke-width=".5"/><circle cx="29.5" cy="19" r="1.700" fill="#e0e0e0" stroke="#000" stroke-width=".5"/><circle cx="35.5" cy="13" r="1.700" fill="#ff0000" stroke="#000" stroke-width=".5"/><circle cx="35.5" cy="19" r="1.700" fill="#008000" stroke="#000" stroke-width=".5"/><rect x="3.5" y="24.5" width="14" height="13" fill="#808080"/><rect x="3.5" y="24.5" width="13" height="8" fill="#f0f0f0" stroke="#fff" stroke-width=".6"/><path d="M5.5 27.500 h8" stroke="#000" stroke-width=".8"/><path d="M12.5 27.500 h3" stroke="#ff0000" stroke-width=".9"/><path d="M9.5 31 l2 -3.500" stroke="#000" stroke-width=".7"/><rect x="22.5" y="24.5" width="14" height="13" fill="#808080"/><rect x="22.5" y="24.5" width="13" height="8" fill="#f0f0f0" stroke="#fff" stroke-width=".6"/><path d="M24.5 27.500 h8" stroke="#000" stroke-width=".8"/><path d="M31.5 27.500 h3" stroke="#ff0000" stroke-width=".9"/><path d="M28.5 31 l2 -3.500" stroke="#000" stroke-width=".7"/></g></svg>
<span style="left:890px;top:333px;width:80px;text-align:center;font-size:11px;letter-spacing:-0.15px;">system</span>
<svg style="left:908px;top:283px;" width="46" height="48" viewBox="-2 -4 46 48"><g transform="translate(2.5,4)"><rect x="6" y="2" width="10" height="8" fill="#ff00ff"/><rect x="16" y="2" width="9" height="8" fill="#ff0000"/><path d="M4 5 L6 2 V10 H13 L11 14 H4Z" fill="#800080"/><path d="M13 14 L16 10 V18 L13 22Z" fill="#808000"/><rect x="16" y="10" width="9" height="8" fill="#ffff00"/><rect x="25" y="10" width="8" height="8" fill="#ffffff"/><rect x="25.500" y="10.500" width="7.500" height="7.500" fill="none" stroke="#c0c0c0" stroke-width=".6"/><rect x="6" y="18" width="10" height="8" fill="#00ff00"/><rect x="16" y="18" width="9" height="8" fill="#00ffff"/><rect x="25" y="18" width="8" height="8" fill="#0000ff"/><path d="M4 21 L6 18 V26 L4 30Z" fill="#008000"/><path d="M4 30 L6 26 H33 L31 30Z" fill="#003060"/></g></svg>
<span style="left:949px;top:333px;width:80px;text-align:center;font-size:11px;letter-spacing:-0.15px;">active_x</span>
<svg style="left:967px;top:283px;" width="46" height="48" viewBox="-2 -4 46 48"><g transform="translate(0,0)"><defs><radialGradient id="axg" cx="50%" cy="45%" r="55%"><stop offset="0" stop-color="#ffe040"/><stop offset=".25" stop-color="#d0a020"/><stop offset="1" stop-color="#204080"/></radialGradient></defs><circle cx="20" cy="20" r="19" fill="#305898"/><path d="M20 20 Q4 16 5 32 Q10 40 20 38 Q10 30 20 20Z" fill="#1838a0"/><path d="M20 20 Q8 6 22 1 Q34 2 38 12 Q28 6 20 20Z" fill="#a03818"/><path d="M22 2 Q30 8 24 14 Q30 4 36 12" stroke="#e0d8c0" stroke-width="1.2" fill="none"/><path d="M20 20 Q36 12 38 26 Q34 38 22 39 Q34 30 20 20Z" fill="#207850"/><path d="M36 20 Q36 32 24 38 M33 16 Q36 28 26 34" stroke="#d0e8d8" stroke-width="1.1" fill="none"/><path d="M3 22 Q4 34 14 37 M7 20 Q8 30 16 33" stroke="#a8c0e8" stroke-width="1" fill="none"/><circle cx="19" cy="19" r="6.500" fill="url(#axg)"/><circle cx="18" cy="18" r="3.500" fill="#f8e040"/><circle cx="17" cy="19" r="1.500" fill="#e03020"/><circle cx="28" cy="16" r="1.800" fill="#e8e8e8"/></g></svg>
<span style="left:890px;top:395px;width:80px;text-align:center;font-size:11px;letter-spacing:-0.15px;">alarm</span>
<svg style="left:908px;top:345px;" width="46" height="48" viewBox="-2 -4 46 48"><g transform="translate(6,2)"><rect x="8.500" y="0.500" width="18" height="29" fill="#fff" stroke="#000"/><rect x="6.500" y="2.500" width="18" height="29" fill="#fff" stroke="#000"/><path d="M2.500 4.500 H18.500 L22.500 8.500 V34.500 H2.500Z" fill="#fff" stroke="#000"/><path d="M18.500 4.500 V8.500 H22.500" fill="none" stroke="#000" stroke-width=".8"/><g transform="rotate(35 12 20)"><path d="M12 11 Q15 11 15.500 15.500 L17.500 23 H6.500 L8.500 15.500 Q9 11 12 11Z" fill="#ffe000" stroke="#806000" stroke-width=".6"/><path d="M14 12 Q15.500 14 15.800 16 L17.500 23 H14.500Z" fill="#c0a000"/><circle cx="12" cy="25" r="1.800" fill="#ffe000" stroke="#806000" stroke-width=".6"/></g></g></svg>
<span style="left:949px;top:395px;width:80px;text-align:center;font-size:11px;letter-spacing:-0.15px;">archiver</span>
<svg style="left:967px;top:345px;" width="46" height="48" viewBox="-2 -4 46 48"><g transform="translate(1,4.5)"><path d="M4 26 L14 30 L36 20 L32 16Z" fill="#909090"/><path d="M15.8 3.2 h17 v10 h-17z" fill="#ffff00" stroke="#a0a000" stroke-width=".6"/><path d="M32.8 3.2 v10 l2.500 -2.500 v-10z" fill="#c8c800"/><path d="M12.6 6.4 h17 v10 h-17z" fill="#ffff00" stroke="#a0a000" stroke-width=".6"/><path d="M29.6 6.4 v10 l2.500 -2.500 v-10z" fill="#c8c800"/><path d="M9.4 9.6 h17 v10 h-17z" fill="#ffff00" stroke="#a0a000" stroke-width=".6"/><path d="M26.4 9.6 v10 l2.500 -2.500 v-10z" fill="#c8c800"/><path d="M6.2 12.8 h17 v10 h-17z" fill="#ffff00" stroke="#a0a000" stroke-width=".6"/><path d="M23.2 12.8 v10 l2.500 -2.500 v-10z" fill="#c8c800"/><rect x="3" y="16" width="20" height="11" fill="#ffff00" stroke="#a0a000" stroke-width=".6"/><path d="M4.500 25 l1.500 -7 1.500 7 1.500 -7 1.500 7 1.500 -7 1.500 7 1.500 -7 1.500 7 1.500 -7 1.500 7 1.500 -7" stroke="#000" stroke-width=".8" fill="none"/><path d="M23 16 v11 l3 -3 v-11z" fill="#c8c800"/></g></svg>
<span style="left:890px;top:457px;width:80px;text-align:center;font-size:11px;letter-spacing:-0.15px;">backup</span>
<svg style="left:908px;top:407px;" width="46" height="48" viewBox="-2 -4 46 48"><g transform="translate(1,0)"><g transform="translate(1,1) scale(0.91)"><path d="M4 2 H39 V37 H8 L4 33Z" fill="#606060"/><path d="M1 0.500 H35.500 V34.500 H5 L1 30.500Z" fill="#0000e0" stroke="#000060" stroke-width=".8"/><rect x="7" y="0.500" width="22" height="15" fill="#fff"/><path d="M9 3.500h18M9 6.500h18M9 9.500h18M9 12.500h10" stroke="#a000a0" stroke-width="1"/><rect x="10" y="21" width="16" height="13" fill="#d8d8d8"/><rect x="13" y="22" width="4" height="9" fill="#0000e0"/><rect x="2.500" y="2.500" width="1.500" height="1.500" fill="#000"/><rect x="31.500" y="2.500" width="1.500" height="1.500" fill="#000"/><path d="M38 14 H24 V10 L15.500 18 L24 26 V22 H38Z" fill="#ffff00" stroke="#404000" stroke-width=".7"/></g></g></svg>
<span style="left:949px;top:457px;width:80px;text-align:center;font-size:11px;letter-spacing:-0.15px;">boolean_r...</span>
<svg style="left:967px;top:407px;" width="46" height="48" viewBox="-2 -4 46 48"><g transform="translate(0,0)"><circle cx="7.500" cy="9.500" r="4.200" fill="#108010" stroke="#000" stroke-width=".8"/><circle cx="6.500" cy="8.500" r="1.500" fill="#60c060"/><text x="7.500" y="21.500" text-anchor="middle" font-family="Liberation Serif,serif" font-size="8" font-weight="bold">0</text><rect x="26.6" y="17.5" width="1" height="1" fill="#ff0000"/><rect x="19.9" y="15.5" width="1" height="1" fill="#ff0000"/><rect x="22.2" y="5.1" width="1" height="1" fill="#ff0000"/><rect x="36.4" y="9.9" width="1" height="1" fill="#ff0000"/><rect x="25.6" y="15.5" width="1" height="1" fill="#ff0000"/><rect x="34.1" y="8.8" width="1" height="1" fill="#ff0000"/><rect x="30.2" y="2.1" width="1" height="1" fill="#ff0000"/><rect x="22.2" y="4.4" width="1" height="1" fill="#ff0000"/><rect x="19.0" y="1.0" width="1" height="1" fill="#ff0000"/><rect x="16.3" y="7.6" width="1" height="1" fill="#ff0000"/><rect x="23.4" y="4.2" width="1" height="1" fill="#ff0000"/><rect x="26.5" y="0.2" width="1" height="1" fill="#ff0000"/><rect x="24.4" y="13.9" width="1" height="1" fill="#ff0000"/><rect x="31.4" y="3.0" width="1" height="1" fill="#ff0000"/><rect x="23.9" y="-1.5" width="1" height="1" fill="#ff0000"/><rect x="23.5" y="-1.7" width="1" height="1" fill="#ff0000"/><rect x="17.9" y="15.3" width="1" height="1" fill="#ff0000"/><rect x="15.6" y="12.8" width="1" height="1" fill="#ff0000"/><rect x="30.1" y="5.1" width="1" height="1" fill="#ff0000"/><rect x="30.2" y="13.8" width="1" height="1" fill="#ff0000"/><rect x="33.7" y="7.3" width="1" height="1" fill="#ff0000"/><rect x="21.1" y="4.0" width="1" height="1" fill="#ff0000"/><rect x="18.5" y="8.7" width="1" height="1" fill="#ff0000"/><rect x="20.8" y="16.1" width="1" height="1" fill="#ff0000"/><rect x="16.6" y="3.5" width="1" height="1" fill="#ff0000"/><rect x="21.4" y="-1.0" width="1" height="1" fill="#ff0000"/><rect x="33.1" y="0.0" width="1" height="1" fill="#ff0000"/><rect x="23.1" y="3.7" width="1" height="1" fill="#ff0000"/><rect x="33.2" y="0.3" width="1" height="1" fill="#ff0000"/><rect x="33.2" y="4.1" width="1" height="1" fill="#ff0000"/><rect x="24.6" y="2.8" width="1" height="1" fill="#ff0000"/><rect x="30.3" y="1.4" width="1" height="1" fill="#ff0000"/><rect x="24.8" y="14.3" width="1" height="1" fill="#ff0000"/><rect x="32.9" y="-0.1" width="1" height="1" fill="#ff0000"/><rect x="34.7" y="14.4" width="1" height="1" fill="#ff0000"/><rect x="20.9" y="12.2" width="1" height="1" fill="#ff0000"/><rect x="23.3" y="18.6" width="1" height="1" fill="#ff0000"/><rect x="29.7" y="5.2" width="1" height="1" fill="#ff0000"/><rect x="22.0" y="5.5" width="1" height="1" fill="#ff0000"/><rect x="24.6" y="2.0" width="1" height="1" fill="#ff0000"/><rect x="34.3" y="1.3" width="1" height="1" fill="#ff0000"/><rect x="14.5" y="8.6" width="1" height="1" fill="#ff0000"/><rect x="24.0" y="14.1" width="1" height="1" fill="#ff0000"/><rect x="21.8" y="5.9" width="1" height="1" fill="#ff0000"/><rect x="28.5" y="16.2" width="1" height="1" fill="#ff0000"/><rect x="21.4" y="5.2" width="1" height="1" fill="#ff0000"/><rect x="36.3" y="11.8" width="1" height="1" fill="#ff0000"/><rect x="21.6" y="19.3" width="1" height="1" fill="#ff0000"/><rect x="31.9" y="4.5" width="1" height="1" fill="#ff0000"/><rect x="17.9" y="11.1" width="1" height="1" fill="#ff0000"/><rect x="20.5" y="2.0" width="1" height="1" fill="#ff0000"/><rect x="17.6" y="5.7" width="1" height="1" fill="#ff0000"/><rect x="33.7" y="6.0" width="1" height="1" fill="#ff0000"/><rect x="17.2" y="13.1" width="1" height="1" fill="#ff0000"/><rect x="26.5" y="15.9" width="1" height="1" fill="#ff0000"/><rect x="34.3" y="7.8" width="1" height="1" fill="#ff0000"/><rect x="21.2" y="7.5" width="1" height="1" fill="#ff0000"/><rect x="18.4" y="13.5" width="1" height="1" fill="#ff0000"/><rect x="34.9" y="10.1" width="1" height="1" fill="#ff0000"/><rect x="22.4" y="5.0" width="1" height="1" fill="#ff0000"/><rect x="20.4" y="3.2" width="1" height="1" fill="#ff0000"/><rect x="22.9" y="2.4" width="1" height="1" fill="#ff0000"/><rect x="23.4" y="-0.4" width="1" height="1" fill="#ff0000"/><rect x="31.3" y="9.7" width="1" height="1" fill="#ff0000"/><rect x="21.0" y="-1.1" width="1" height="1" fill="#ff0000"/><rect x="25.9" y="17.0" width="1" height="1" fill="#ff0000"/><rect x="20.1" y="5.1" width="1" height="1" fill="#ff0000"/><rect x="21.4" y="14.3" width="1" height="1" fill="#ff0000"/><rect x="20.0" y="15.5" width="1" height="1" fill="#ff0000"/><rect x="23.7" y="16.1" width="1" height="1" fill="#ff0000"/><circle cx="26" cy="9" r="5.500" fill="#ff2020" stroke="#909090" stroke-width="1.200"/><circle cx="27" cy="8" r="1.200" fill="#ffe000"/><path d="M20 21 Q22 16 25 18 L34 21 V28 L24 29 Q19 27 20 21Z" fill="#f8c8c8" stroke="#000" stroke-width=".8"/><path d="M21 20 L33 27 M21 24 L30 29 M24 18 L34 24" stroke="#e04040" stroke-width=".7"/><rect x="34" y="19" width="4.500" height="11" fill="#0020d0" stroke="#000060" stroke-width=".6"/><path d="M23 27 L19 36" stroke="#000" stroke-width="2.200"/><path d="M13 38 L18 35.500 H24 L26 38Z" fill="#006040"/><path d="M11 38.500 H27" stroke="#000" stroke-width="1"/></g></svg>
<span style="left:890px;top:519px;width:80px;text-align:center;font-size:11px;letter-spacing:-0.15px;">box</span>
<svg style="left:908px;top:469px;" width="46" height="48" viewBox="-2 -4 46 48"><g transform="translate(1,-3)"><rect x="2.500" y="15.500" width="35" height="14" fill="#00ffff" stroke="#000"/></g></svg>
<span style="left:949px;top:519px;width:80px;text-align:center;font-size:11px;letter-spacing:-0.15px;">buffer_co...</span>
<svg style="left:967px;top:469px;" width="46" height="48" viewBox="-2 -4 46 48"><g transform="translate(1,-3)"><rect x="1" y="4.500" width="38" height="18" fill="#808080"/><path d="M1.500 22.500 V5 H39" stroke="#000" fill="none"/><path d="M4.0 13.5 L4.5 13.0 L5.0 12.1 L5.5 11.0 L6.0 10.0 L6.5 8.8 L7.0 9.2 L7.5 8.1 L8.0 7.1 L8.5 7.7 L9.0 7.7 L9.5 9.4 L10.0 9.8 L10.5 10.9 L11.0 11.7 L11.5 12.6 L12.0 13.4 L12.5 13.3 L13.0 12.7 L13.5 11.5 L14.0 10.5 L14.5 10.1 L15.0 8.5 L15.5 8.8 L16.0 7.7 L16.5 8.4 L17.0 8.8 L17.5 8.0 L18.0 9.7 L18.5 10.5 L19.0 10.9 L19.5 12.1 L20.0 13.1 L20.5 13.5 L21.0 13.0 L21.5 12.1 L22.0 11.4 L22.5 9.8 L23.0 9.1 L23.5 7.9 L24.0 7.4 L24.5 8.1 L25.0 8.1 L25.5 8.8 L26.0 9.4 L26.5 10.2 L27.0 10.9 L27.5 11.7 L28.0 12.8 L28.5 13.3 L29.0 13.3 L29.5 12.7 L30.0 11.6 L30.5 10.8 L31.0 10.0 L31.5 8.9 L32.0 8.0 L32.5 8.6 L33.0 7.1 L33.5 8.8 L34.0 8.2 L34.5 8.9 L35.0 10.7 L35.5 11.1 L36.0 12.3 L36.5 13.0 L37.0 13.5 L37.0 13.5 L36.5 13.9 L36.0 15.0 L35.5 15.6 L35.0 17.0 L34.5 18.2 L34.0 19.1 L33.5 18.7 L33.0 18.9 L32.5 19.1 L32.0 19.1 L31.5 17.6 L31.0 17.5 L30.5 16.5 L30.0 15.4 L29.5 14.2 L29.0 13.7 L28.5 13.6 L28.0 14.3 L27.5 15.3 L27.0 16.6 L26.5 17.1 L26.0 18.6 L25.5 18.8 L25.0 18.8 L24.5 18.9 L24.0 18.4 L23.5 17.8 L23.0 17.3 L22.5 16.9 L22.0 16.1 L21.5 14.7 L21.0 13.9 L20.5 13.5 L20.0 14.0 L19.5 14.8 L19.0 15.6 L18.5 16.8 L18.0 18.1 L17.5 18.4 L17.0 18.8 L16.5 18.5 L16.0 19.8 L15.5 18.0 L15.0 18.1 L14.5 17.6 L14.0 16.0 L13.5 15.4 L13.0 14.5 L12.5 13.7 L12.0 13.7 L11.5 14.3 L11.0 15.2 L10.5 16.0 L10.0 17.6 L9.5 17.8 L9.0 18.7 L8.5 19.9 L8.0 19.7 L7.5 19.7 L7.0 18.4 L6.5 17.7 L6.0 17.0 L5.5 15.7 L5.0 14.7 L4.5 14.0 L4.0 13.5Z" fill="#00ff00"/><path d="M3 13.5 H38" stroke="#00ff00" stroke-width="1"/><text x="20.500" y="38.500" text-anchor="middle" font-family="Liberation Sans,sans-serif" font-size="16" font-weight="bold" fill="#000" textLength="34" lengthAdjust="spacingAndGlyphs">a[i]</text><path d="M20 9.500 L28 18 H23 V24 H28 L20 33 L12 24 H17 V18 H12Z" fill="#ff0000" stroke="#a00000" stroke-width=".5"/></g></svg>
<span style="left:890px;top:581px;width:80px;text-align:center;font-size:11px;letter-spacing:-0.15px;">buffer_dis...</span>
<svg style="left:908px;top:531px;" width="46" height="48" viewBox="-2 -4 46 48"><g transform="translate(1,-3)"><rect x="1" y="4" width="38" height="38" fill="#808080"/><path d="M1.500 42 V4.500 H39" stroke="#000" fill="none"/><path d="M4.0 22.5 L4.5 22.2 L5.0 21.5 L5.5 21.1 L6.0 20.1 L6.5 19.6 L7.0 19.4 L7.5 18.7 L8.0 19.1 L8.5 18.7 L9.0 19.4 L9.5 19.9 L10.0 20.2 L10.5 20.7 L11.0 21.7 L11.5 22.2 L12.0 22.5 L12.5 22.1 L13.0 21.5 L13.5 20.9 L14.0 19.8 L14.5 19.9 L15.0 18.6 L15.5 18.9 L16.0 19.0 L16.5 19.1 L17.0 19.2 L17.5 19.2 L18.0 20.4 L18.5 20.8 L19.0 21.5 L19.5 22.2 L20.0 22.5 L20.5 22.2 L21.0 21.7 L21.5 21.0 L22.0 20.0 L22.5 19.6 L23.0 19.2 L23.5 18.6 L24.0 18.6 L24.5 18.9 L25.0 18.7 L25.5 19.3 L26.0 20.3 L26.5 20.8 L27.0 21.6 L27.5 22.1 L28.0 22.5 L28.5 22.2 L29.0 21.4 L29.5 21.0 L30.0 20.2 L30.5 19.3 L31.0 19.4 L31.5 18.7 L32.0 19.1 L32.5 18.5 L33.0 18.7 L33.5 19.5 L34.0 19.9 L34.5 21.0 L35.0 21.5 L35.5 22.2 L36.0 22.5 L36.0 22.5 L35.5 22.9 L35.0 23.6 L34.5 24.1 L34.0 25.0 L33.5 25.1 L33.0 26.2 L32.5 26.5 L32.0 27.0 L31.5 26.7 L31.0 25.8 L30.5 25.4 L30.0 25.0 L29.5 23.9 L29.0 23.4 L28.5 22.8 L28.0 22.5 L27.5 22.8 L27.0 23.5 L26.5 24.0 L26.0 24.7 L25.5 25.4 L25.0 26.4 L24.5 25.9 L24.0 26.4 L23.5 26.4 L23.0 26.4 L22.5 25.8 L22.0 25.1 L21.5 24.0 L21.0 23.4 L20.5 22.8 L20.0 22.5 L19.5 22.9 L19.0 23.3 L18.5 24.0 L18.0 24.7 L17.5 25.3 L17.0 26.0 L16.5 26.4 L16.0 26.2 L15.5 25.8 L15.0 25.9 L14.5 25.4 L14.0 24.9 L13.5 24.3 L13.0 23.5 L12.5 22.8 L12.0 22.5 L11.5 22.9 L11.0 23.3 L10.5 24.3 L10.0 25.0 L9.5 25.8 L9.0 26.3 L8.5 26.2 L8.0 26.3 L7.5 25.9 L7.0 26.1 L6.5 25.1 L6.0 24.6 L5.5 24.0 L5.0 23.3 L4.5 22.8 L4.0 22.5Z" fill="#00ff00"/><path d="M3 22.5 H37" stroke="#00ff00" stroke-width="1"/><text x="37.500" y="12.500" text-anchor="end" font-family="Liberation Sans,sans-serif" font-size="7.500" font-weight="bold" fill="#ff0000">MAX</text><text x="35.500" y="38.500" text-anchor="end" font-family="Liberation Sans,sans-serif" font-size="7.500" font-weight="bold" fill="#00ffff">MIN</text></g></svg>
<span style="left:949px;top:581px;width:80px;text-align:center;font-size:11px;letter-spacing:-0.15px;">buffer_su...</span>
<svg style="left:967px;top:531px;" width="46" height="48" viewBox="-2 -4 46 48"><g transform="translate(1,-3)"><rect x="1" y="4" width="38" height="38" fill="#808080"/><path d="M1.500 42 V4.500 H39" stroke="#000" fill="none"/><path d="M4.0 11.5 L4.5 11.2 L5.0 10.8 L5.5 9.9 L6.0 9.7 L6.5 8.8 L7.0 8.0 L7.5 8.5 L8.0 7.9 L8.5 8.0 L9.0 8.8 L9.5 8.9 L10.0 9.3 L10.5 10.1 L11.0 10.6 L11.5 11.2 L12.0 11.5 L12.5 11.2 L13.0 10.7 L13.5 9.9 L14.0 9.4 L14.5 8.6 L15.0 8.5 L15.5 7.9 L16.0 8.4 L16.5 8.3 L17.0 8.2 L17.5 8.7 L18.0 9.5 L18.5 10.2 L19.0 10.7 L19.5 11.2 L20.0 11.5 L20.5 11.2 L21.0 10.7 L21.5 9.9 L22.0 9.2 L22.5 9.2 L23.0 8.5 L23.5 8.1 L24.0 8.5 L24.5 8.2 L25.0 8.0 L25.5 9.1 L26.0 9.4 L26.5 10.2 L27.0 10.7 L27.5 11.2 L28.0 11.5 L28.5 11.2 L29.0 10.8 L29.5 10.0 L30.0 9.7 L30.5 9.2 L31.0 8.4 L31.5 7.7 L32.0 8.1 L32.5 8.2 L33.0 8.3 L33.5 9.2 L34.0 9.4 L34.5 10.2 L35.0 10.6 L35.5 11.2 L36.0 11.5 L36.0 11.5 L35.5 11.8 L35.0 12.2 L34.5 12.9 L34.0 13.9 L33.5 14.5 L33.0 14.3 L32.5 15.1 L32.0 15.5 L31.5 14.6 L31.0 14.7 L30.5 13.8 L30.0 13.5 L29.5 13.0 L29.0 12.3 L28.5 11.8 L28.0 11.5 L27.5 11.8 L27.0 12.4 L26.5 13.0 L26.0 13.6 L25.5 14.1 L25.0 15.0 L24.5 15.0 L24.0 14.5 L23.5 15.2 L23.0 14.5 L22.5 14.1 L22.0 13.4 L21.5 12.9 L21.0 12.3 L20.5 11.8 L20.0 11.5 L19.5 11.8 L19.0 12.4 L18.5 12.8 L18.0 13.7 L17.5 14.4 L17.0 14.6 L16.5 15.1 L16.0 14.7 L15.5 15.1 L15.0 14.5 L14.5 13.9 L14.0 13.9 L13.5 12.9 L13.0 12.3 L12.5 11.8 L12.0 11.5 L11.5 11.8 L11.0 12.3 L10.5 13.1 L10.0 13.4 L9.5 13.8 L9.0 15.0 L8.5 14.6 L8.0 15.4 L7.5 15.4 L7.0 14.7 L6.5 13.8 L6.0 13.3 L5.5 12.8 L5.0 12.3 L4.5 11.8 L4.0 11.5Z" fill="#00ff00"/><path d="M3 11.5 H37" stroke="#00ff00" stroke-width="1"/><path d="M4.0 33.5 L4.5 33.3 L5.0 33.0 L5.5 32.8 L6.0 32.4 L6.5 32.0 L7.0 31.9 L7.5 31.4 L8.0 31.1 L8.5 30.8 L9.0 31.2 L9.5 31.0 L10.0 31.2 L10.5 30.9 L11.0 31.2 L11.5 31.9 L12.0 31.7 L12.5 32.1 L13.0 32.6 L13.5 33.0 L14.0 33.3 L14.5 33.5 L15.0 33.4 L15.5 33.2 L16.0 32.9 L16.5 32.6 L17.0 32.4 L17.5 31.8 L18.0 31.5 L18.5 31.0 L19.0 31.0 L19.5 30.8 L20.0 30.9 L20.5 30.8 L21.0 31.1 L21.5 31.4 L22.0 31.2 L22.5 31.6 L23.0 32.0 L23.5 32.5 L24.0 32.9 L24.5 33.2 L25.0 33.4 L25.5 33.5 L26.0 33.3 L26.5 33.0 L27.0 32.6 L27.5 32.3 L28.0 31.7 L28.5 31.4 L29.0 31.6 L29.5 31.3 L30.0 30.7 L30.5 30.9 L31.0 30.5 L31.5 31.1 L32.0 31.5 L32.5 31.3 L33.0 31.6 L33.5 32.2 L34.0 32.5 L34.5 32.8 L35.0 33.0 L35.5 33.3 L36.0 33.5 L36.0 33.5 L35.5 33.6 L35.0 33.9 L34.5 34.3 L34.0 34.5 L33.5 35.0 L33.0 35.3 L32.5 35.4 L32.0 36.0 L31.5 35.7 L31.0 36.2 L30.5 35.8 L30.0 36.0 L29.5 35.7 L29.0 35.5 L28.5 35.6 L28.0 35.2 L27.5 34.6 L27.0 34.4 L26.5 34.0 L26.0 33.7 L25.5 33.5 L25.0 33.6 L24.5 33.8 L24.0 34.2 L23.5 34.4 L23.0 34.7 L22.5 35.3 L22.0 35.4 L21.5 35.6 L21.0 35.7 L20.5 35.8 L20.0 36.2 L19.5 35.9 L19.0 36.0 L18.5 35.7 L18.0 35.5 L17.5 35.4 L17.0 34.8 L16.5 34.5 L16.0 34.2 L15.5 33.8 L15.0 33.6 L14.5 33.5 L14.0 33.7 L13.5 34.0 L13.0 34.3 L12.5 34.8 L12.0 35.3 L11.5 35.2 L11.0 36.0 L10.5 36.2 L10.0 36.1 L9.5 36.1 L9.0 35.8 L8.5 35.7 L8.0 36.1 L7.5 35.4 L7.0 35.4 L6.5 34.8 L6.0 34.7 L5.5 34.3 L5.0 33.9 L4.5 33.6 L4.0 33.5Z" fill="#00ff00"/><path d="M3 33.5 H37" stroke="#00ff00" stroke-width="1"/><rect x="7.500" y="18.500" width="25" height="8" fill="#fff" stroke="#000"/><path d="M10 22.500 h5 M12.500 20 v5 M18 22.500 h5 M26.500 20 l4.500 5 M31 20 l-4.500 5" stroke="#000" stroke-width="1"/></g></svg>
<div class="dith" style="left:1056px;top:157px;width:16px;height:434px;"></div>
<div class="rb2" style="left:1056px;top:157px;width:16px;height:16px;"><svg style="left:0;top:0" width="14" height="14"><polygon points="3.5,8.75 10.5,8.75 7,5.25" fill="#808080"/></svg></div>
<div class="rb2" style="left:1056px;top:575px;width:16px;height:16px;"><svg style="left:0;top:0" width="14" height="14"><polygon points="3.5,5.25 10.5,5.25 7,8.75" fill="#000"/></svg></div>
<div class="rb2" style="left:1056px;top:173px;width:16px;height:83px;"></div>
<div class="rb2" style="left:1073px;top:155px;width:135px;height:28px;"></div>
<svg style="left:1076px;top:160px;" width="20" height="19" viewBox="0 0 20 19"><path d="M6 8 L9 5 H18 V12 L15 15 H6Z" fill="#00e0e0" stroke="#000" stroke-width=".9"/><path d="M9 4 L11 1.500 H18.500 L17 4Z" fill="#00c8c8" stroke="#000" stroke-width=".8"/><path d="M6 8 H15 V15 M15 8 L18 5" stroke="#000" stroke-width=".8" fill="none"/><path d="M7 11 H13 V17 H7Z" fill="#00e0e0" stroke="#000" stroke-width=".8"/><rect x="0.500" y="0.500" width="10" height="6.500" fill="#fff" stroke="#000"/><path d="M2 3 Q5 1 6 3.500 T9 3" stroke="#000" stroke-width=".7" fill="none"/><rect x="2.500" y="6.500" width="3" height="9" fill="#ffe000" stroke="#000" stroke-width=".9"/></svg>
<span class="ui" style="left:1101px;top:164px;">Všechny přístroje</span>
<div class="rb2" style="left:1074px;top:183px;width:133px;height:25px;"></div>
<svg style="left:1080px;top:188px;" width="14" height="17" viewBox="0 0 14 17"><g transform="translate(0.5,0.5)"><path d="M4.5 1 H8.5 L12 13 V15.5 H2.5 V13Z" fill="#808080" transform="translate(1,1)"/><path d="M4 0.5 H7.5 L11 12 V14.5 H0.5 V12Z" fill="#008080" stroke="#001818" stroke-width=".8"/><path d="M4.700 1.800 H6.900 L8.200 9.500 H3.300Z" fill="#f0f0d8"/><path d="M6 10 L3.2 1.5" stroke="#000" stroke-width=".8"/><path d="M5.8 2 V10" stroke="#c0a000" stroke-width=".7"/><path d="M1.2 12.2 H10.4" stroke="#00c0c0" stroke-width=".8"/><rect x="0" y="2" width="1" height="1" fill="#000"/></g></svg>
<span class="ui" style="left:1101px;top:190px;">Systémové přístroje</span>
<div class="rb2" style="left:1074px;top:209px;width:133px;height:25px;"></div>
<svg style="left:1076px;top:212px;" width="21" height="20" viewBox="0 0 21 20"><circle cx="10" cy="10" r="8" fill="#f8f8f8"/><path d="M10 2 Q16 2 18 7" stroke="#e00000" stroke-width="2.200" fill="none"/><path d="M12 4 Q16 5 16.500 9" stroke="#e00000" stroke-width="1.500" fill="none"/><path d="M2 8 Q1 14 6 17" stroke="#0000e0" stroke-width="2.200" fill="none"/><path d="M5 8 Q4 12 8 15" stroke="#0000e0" stroke-width="1.500" fill="none"/><path d="M18 11 Q17 17 11 18" stroke="#00a060" stroke-width="2.200" fill="none"/><circle cx="10" cy="10" r="3" fill="#ffd000"/><circle cx="10" cy="10" r="1.300" fill="#e03020"/><path d="M13 12 Q15 14 13 16" stroke="#60b0a0" stroke-width="1.500" fill="none"/></svg>
<span class="ui" style="left:1101px;top:216px;">ActiveX kontejner</span>
<div class="rb2" style="left:1074px;top:235px;width:133px;height:25px;"></div>
<svg style="left:1076px;top:238px;" width="21" height="20" viewBox="0 0 21 20"><path d="M1 14 L6 16 L19 11 L17 9Z" fill="#909090"/><path d="M7.6 4.5 h9 v6 h-9z" fill="#ffff60" stroke="#a0a000" stroke-width=".5"/><path d="M16.6 4.5 v6 l1.500 -1.500 v-6z" fill="#c8c800"/><path d="M5.4 6 h9 v6 h-9z" fill="#ffff60" stroke="#a0a000" stroke-width=".5"/><path d="M14.4 6 v6 l1.500 -1.500 v-6z" fill="#c8c800"/><path d="M3.2 7.5 h9 v6 h-9z" fill="#ffff60" stroke="#a0a000" stroke-width=".5"/><path d="M12.2 7.5 v6 l1.500 -1.500 v-6z" fill="#c8c800"/><rect x="1" y="9" width="10" height="6" fill="#ffff60" stroke="#a0a000" stroke-width=".5"/></svg>
<span class="ui" style="left:1101px;top:242px;">Archivery</span>
<div class="rb2" style="left:1074px;top:261px;width:133px;height:25px;"></div>
<svg style="left:1076px;top:264px;" width="21" height="20" viewBox="0 0 21 20"><rect x="0" y="0" width="20" height="20" fill="#808080"/><path d="M0.500 20 V0.500 H20" stroke="#000" fill="none"/><path d="M3.0 10.0 L3.5 9.7 L4.0 9.1 L4.5 8.4 L5.0 7.7 L5.5 7.5 L6.0 7.2 L6.5 6.2 L7.0 6.8 L7.5 7.0 L8.0 6.8 L8.5 7.8 L9.0 8.3 L9.5 9.1 L10.0 9.7 L10.5 10.0 L11.0 9.7 L11.5 9.0 L12.0 8.4 L12.5 7.6 L13.0 7.0 L13.5 7.2 L14.0 6.3 L14.5 6.4 L15.0 6.9 L15.5 7.6 L16.0 7.5 L16.5 8.4 L17.0 9.0 L17.5 9.6 L18.0 10.0 L18.0 10.0 L17.5 10.3 L17.0 11.0 L16.5 11.6 L16.0 12.5 L15.5 13.1 L15.0 12.9 L14.5 13.1 L14.0 13.2 L13.5 13.7 L13.0 12.8 L12.5 12.3 L12.0 11.5 L11.5 10.9 L11.0 10.3 L10.5 10.0 L10.0 10.3 L9.5 10.9 L9.0 11.8 L8.5 12.4 L8.0 13.2 L7.5 13.6 L7.0 14.0 L6.5 13.6 L6.0 12.9 L5.5 13.1 L5.0 12.5 L4.5 11.8 L4.0 10.9 L3.5 10.4 L3.0 10.0Z" fill="#00ff00"/><path d="M2 10 H19" stroke="#00ff00" stroke-width="1"/></svg>
<span class="ui" style="left:1101px;top:268px;">Buffery</span>
<div class="rb2" style="left:1074px;top:287px;width:133px;height:25px;"></div>
<svg style="left:1076px;top:290px;" width="21" height="20" viewBox="0 0 21 20"><rect x="6.500" y="3.500" width="10" height="13" rx="1.500" fill="#008c8c" stroke="#000"/><path d="M16.500 10 h3" stroke="#000" stroke-width="2"/><rect x="1" y="3.500" width="3" height="3" fill="#e00000"/><rect x="1" y="8.500" width="3" height="3" fill="#00c000"/><rect x="1" y="13.500" width="3" height="3" fill="#0000e0"/><path d="M4 5h2.500M4 10h2.500M4 15h2.500" stroke="#000"/></svg>
<span class="ui" style="left:1101px;top:294px;">Datové přepínače</span>
<div class="rb2" style="left:1074px;top:313px;width:133px;height:25px;"></div>
<svg style="left:1076px;top:316px;" width="21" height="20" viewBox="0 0 21 20"><circle cx="13" cy="8" r="6" fill="#fff" stroke="#0000c0" stroke-width="1.200"/><path d="M13 8 V2 A6 6 0 0 1 19 8Z" fill="#40c0e0"/><path d="M13 8 L9 11" stroke="#000" stroke-width=".8"/><path d="M6 6 L2 11 H5 L2 17 L8 10 H5 L8 6Z" fill="#ffe000" stroke="#806000" stroke-width=".5"/></svg>
<span class="ui" style="left:1101px;top:320px;">Energetika</span>
<div class="rb2" style="left:1074px;top:339px;width:133px;height:25px;"></div>
<svg style="left:1076px;top:342px;" width="21" height="20" viewBox="0 0 21 20"><circle cx="8" cy="8" r="7" fill="#2040d0" stroke="#001080" stroke-width=".8"/><path d="M4 3 Q8 2 9 5 Q7 8 4 7 Q2 5 4 3Z M9 9 Q13 8 13 12 Q11 14 9 13Z M2 10 Q5 10 5 13 L4 14Z" fill="#20c040"/><rect x="11.500" y="9.500" width="7" height="6" fill="#e0e0e0" stroke="#000" stroke-width=".8"/><rect x="12.500" y="10.500" width="5" height="3.500" fill="#40c0c0"/><path d="M10 18.500 h10" stroke="#000" stroke-width="1.500"/><path d="M12 16.500h6" stroke="#808080" stroke-width="1.500"/></svg>
<span class="ui" style="left:1101px;top:346px;">HTTP server</span>
<div class="rb2" style="left:1074px;top:365px;width:133px;height:25px;"></div>
<svg style="left:1076px;top:368px;" width="21" height="20" viewBox="0 0 21 20"><path d="M2 16 L8 17.500 L19 14 L14 12.500Z" fill="#a0a0a0"/><rect x="1" y="7" width="9" height="5" fill="#a00000"/><text x="5.500" y="11.300" text-anchor="middle" font-family="Liberation Sans,sans-serif" font-size="5" font-weight="bold" fill="#fff">123</text><path d="M11 16 L14 5" stroke="#e00000" stroke-width="2"/><path d="M10 5 L18 3 L17 8Z" fill="#e00000"/><path d="M12 10 l5 2" stroke="#e00000" stroke-width="1.500"/></svg>
<span class="ui" style="left:1101px;top:372px;">Integrátory</span>
<div class="rb2" style="left:1074px;top:391px;width:133px;height:25px;"></div>
<svg style="left:1076px;top:394px;" width="21" height="20" viewBox="0 0 21 20"><circle cx="8.500" cy="8" r="6.500" fill="#80d0f0" stroke="#001080" stroke-width="1.800"/><path d="M13 13 L19 19" stroke="#0000a0" stroke-width="2.800"/><ellipse cx="8.500" cy="8" rx="2.500" ry="3.500" fill="#404040"/><path d="M4 5 L13 11 M13 5 L4 11 M8.500 2.500 V13.500" stroke="#404040" stroke-width=".8"/></svg>
<span class="ui" style="left:1101px;top:398px;">Ladicí nástroje</span>
<div class="rb2" style="left:1074px;top:417px;width:133px;height:25px;"></div>
<svg style="left:1076px;top:420px;" width="21" height="20" viewBox="0 0 21 20"><ellipse cx="10" cy="7" rx="7.500" ry="5.500" fill="#c0c0c0" stroke="#606060" stroke-width=".8"/><ellipse cx="9" cy="10" rx="6" ry="3" fill="#202020"/><path d="M3 14 L8 11 L13 14 L17 11" stroke="#000" stroke-width=".8" fill="none"/><circle cx="3.500" cy="15.500" r="2" fill="#fff" stroke="#008000" stroke-width="1.200"/><circle cx="9" cy="16" r="2" fill="#fff" stroke="#008000" stroke-width="1.200"/><circle cx="14.500" cy="15.500" r="2" fill="#fff" stroke="#008000" stroke-width="1.200"/></svg>
<span class="ui" style="left:1101px;top:424px;">Neuronová síť</span>
<div class="rb2" style="left:1074px;top:443px;width:133px;height:25px;"></div>
<svg style="left:1076px;top:446px;" width="21" height="20" viewBox="0 0 21 20"><rect x="4.500" y="1.500" width="11" height="9" fill="#e0e0e0" stroke="#000"/><rect x="6" y="3" width="8" height="6" fill="#40d0d0"/><path d="M3 12.500 H17 L19 17 H1Z" fill="#e0e0e0" stroke="#000" stroke-width=".9"/><path d="M4 14.500h12" stroke="#808080"/><path d="M1 18.500 h18" stroke="#000" stroke-width="1.400"/></svg>
<span class="ui" style="left:1101px;top:450px;">Pomůcky</span>
<div class="rb2" style="left:1074px;top:469px;width:133px;height:25px;"></div>
<svg style="left:1076px;top:472px;" width="21" height="20" viewBox="0 0 21 20"><rect x="3.500" y="2.500" width="13" height="3" fill="#ffe000" stroke="#000" stroke-width=".8"/><rect x="3.500" y="14.500" width="13" height="3" fill="#ffe000" stroke="#000" stroke-width=".8"/><path d="M10 6 L16 10 L10 14 L4 10Z" fill="#f01010" stroke="#800000" stroke-width=".6"/><path d="M10 0v2.500M10 17.500v2.500M1 10h3M16 10h3" stroke="#000"/></svg>
<span class="ui" style="left:1101px;top:476px;">Program</span>
<div class="rb2" style="left:1074px;top:495px;width:133px;height:25px;"></div>
<svg style="left:1076px;top:498px;" width="21" height="20" viewBox="0 0 21 20"><path d="M1.500 7 H5 L10 2.500 V17.500 L5 13 H1.500Z" fill="#c0c0c0" stroke="#000" stroke-width=".9"/><rect x="2.500" y="8" width="3" height="4" fill="#808080"/><path d="M12 6 Q14.500 10 12 14 M14.500 4 Q18 10 14.500 16 M17 2.500 Q21 10 17 17.500" stroke="#000" stroke-width=".9" fill="none"/></svg>
<span class="ui" style="left:1101px;top:502px;">Přehrávání zvuků</span>
<div class="rb2" style="left:1074px;top:521px;width:133px;height:25px;"></div>
<svg style="left:1076px;top:524px;" width="21" height="20" viewBox="0 0 21 20"><circle cx="8" cy="4" r="2" fill="#404040"/><path d="M8 6 v3" stroke="#404040" stroke-width="1.500"/><path d="M3 10 Q8 6 13 10 L13 15 H3Z" fill="#20a0a0" stroke="#004040" stroke-width=".8"/><rect x="0.500" y="13.500" width="6" height="5" fill="#20a0a0" stroke="#004040" stroke-width=".8"/><path d="M12 12 L19 16 L12 19Z" fill="#e02020"/><path d="M13 13 L18 18" stroke="#fff" stroke-width=".8"/><rect x="14" y="15" width="5" height="4" fill="#2040e0"/></svg>
<span class="ui" style="left:1101px;top:528px;">Regulátory</span>
<div class="rb2" style="left:1074px;top:547px;width:133px;height:25px;"></div>
<svg style="left:1076px;top:550px;" width="21" height="20" viewBox="0 0 21 20"><rect x="0.500" y="3.500" width="19" height="13" fill="#20d0d0" stroke="#000"/><path d="M1 17 H20 V4" stroke="#404040" fill="none"/><text x="10" y="13.500" text-anchor="middle" font-family="Liberation Sans,sans-serif" font-size="8" font-weight="bold" fill="#000">TXT</text></svg>
<span class="ui" style="left:1101px;top:554px;">Řetězce</span>
<div style="left:1073px;top:573px;width:1px;height:19px;background:#a0a0a0"></div>
<div class="dith" style="left:1211px;top:155px;width:17px;height:436px;"></div>
<div class="rb2" style="left:1211px;top:155px;width:17px;height:16px;"><svg style="left:0;top:0" width="15" height="14"><polygon points="4,8.75 11,8.75 7.5,5.25" fill="#808080"/></svg></div>
<div class="rb2" style="left:1211px;top:575px;width:17px;height:16px;"><svg style="left:0;top:0" width="15" height="14"><polygon points="4,5.25 11,5.25 7.5,8.75" fill="#000"/></svg></div>
<div class="rb2" style="left:1211px;top:171px;width:17px;height:281px;"></div>
<div style="left:896px;top:594px;width:332px;height:1px;background:#a0a0a0"></div>
<div style="left:896px;top:595px;width:332px;height:1px;background:#fff"></div>
<div style="left:896px;top:599px;width:332px;height:119px;border:1px solid;border-color:#fff #696969 #696969 #fff;box-shadow:inset -1px -1px 0 #a0a0a0"></div>
<div style="left:900px;top:603px;width:324px;height:111px;background:#fff;border:1px solid;border-color:#808080 #fff #fff #808080;box-shadow:inset 1px 1px 0 #696969"></div>
<div style="left:899px;top:718px;width:65px;height:24px;border:1px solid;border-color:transparent #696969 #696969 #fff;border-top:none;box-shadow:inset -1px -1px 0 #a0a0a0;border-radius:0 0 2px 2px"></div>
<svg style="left:906px;top:721px;" width="17" height="16" viewBox="0 0 17 16"><rect x="0.5" y="0.5" width="12" height="9" fill="#808080" stroke="#808080"/><rect x="4.5" y="5.5" width="12" height="9" fill="#fff" stroke="#808080"/><path d="M7 8h6M10 12l3-3" stroke="#808080"/></svg>
<span class="ui" style="left:926px;top:723px;color:#808080">Paleta</span>
<div style="left:1100px;top:718px;width:84px;height:24px;border:1px solid;border-color:transparent transparent #696969 #fff;border-top:none;box-shadow:inset 0 -1px 0 #a0a0a0"></div>
<svg style="left:1105px;top:720px;" width="22" height="18" viewBox="0 0 22 18"><path d="M1 4.5h12" stroke="#0000ff" stroke-width="2.5"/><path d="M12 0.5 L20 4.5 L12 8.5Z" fill="#0000ff"/><text x="0" y="16" font-family="Liberation Sans,sans-serif" font-size="8" font-weight="bold" textLength="19" lengthAdjust="spacingAndGlyphs">event</text></svg>
<span class="ui" style="left:1131px;top:723px;">Událostní</span>
<svg style="left:1182px;top:717px;" width="5" height="26" viewBox="0 0 5 26"><path d="M2 0 q2 3 0 6 t1 7 t-1 6 t1 7" stroke="#808080" fill="none"/></svg>
<div style="left:965px;top:716px;width:135px;height:29px;background:#f0f0f0;border:1px solid;border-color:transparent #696969 #696969 #fff;border-top:none;box-shadow:inset -1px -1px 0 #a0a0a0;border-radius:0 0 2px 2px"></div>
<svg style="left:969px;top:723px;" width="22" height="18" viewBox="0 0 22 18"><path d="M1 4.5h12" stroke="#ff0000" stroke-width="2.5"/><path d="M12 0.5 L20 4.5 L12 8.5Z" fill="#ff0000"/><text x="0" y="16" font-family="Liberation Sans,sans-serif" font-size="8" font-weight="bold" textLength="21" lengthAdjust="spacingAndGlyphs">native</text></svg>
<span class="ui" style="left:995px;top:725px;letter-spacing:0.1px">Nativní procedury</span>
<svg style="left:1191px;top:720px;" width="36" height="16" viewBox="0 0 36 16"><path d="M13 1 L2 8 L13 15Z" fill="#808080"/><path d="M21 1 L33 8 L21 15Z" fill="#000"/></svg>

<!-- p_bottom -->
<div style="left:11px;top:774px;width:78px;height:29px;border:1px solid;border-color:transparent #696969 #696969 #fff;border-top:none;box-shadow:inset -1px -1px 0 #a0a0a0;border-radius:0 0 3px 3px"></div>
<div style="left:91px;top:774px;width:112px;height:29px;border:1px solid;border-color:transparent #696969 #696969 #fff;border-top:none;box-shadow:inset -1px -1px 0 #a0a0a0;border-radius:0 0 3px 3px"></div>
<div style="left:205px;top:774px;width:132px;height:29px;border:1px solid;border-color:transparent #696969 #696969 #fff;border-top:none;box-shadow:inset -1px -1px 0 #a0a0a0;border-radius:0 0 3px 3px"></div>
<div style="left:455px;top:774px;width:111px;height:29px;border:1px solid;border-color:transparent #696969 #696969 #fff;border-top:none;box-shadow:inset -1px -1px 0 #a0a0a0;border-radius:0 0 3px 3px"></div>
<div style="left:337px;top:772px;width:118px;height:33px;background:#f0f0f0;border:1px solid;border-color:transparent #696969 #696969 #fff;border-top:none;box-shadow:inset -1px -1px 0 #a0a0a0;border-radius:0 0 3px 3px"></div>
<span class="ui" style="left:42px;top:782px;letter-spacing:0.05px">Moduly</span>
<span class="ui" style="left:122px;top:782px;letter-spacing:0.05px">Textový editor</span>
<span class="ui" style="left:236.5px;top:782px;letter-spacing:-0.12px">Datové inspektory</span>
<span class="ui" style="left:368px;top:784px;letter-spacing:0.05px">Grafický editor</span>
<span class="ui" style="left:486px;top:782px;letter-spacing:0.05px">Dokumentace</span>
<svg style="left:17px;top:778px;" width="21" height="22" viewBox="0 0 21 22"><rect x="2.5" y="2.5" width="6" height="6" fill="#fff" stroke="#000"/><rect x="0.5" y="0.5" width="6" height="6" fill="#fff" stroke="#000"/><rect x="13.5" y="0.5" width="6" height="6" fill="#fff" stroke="#000"/><rect x="13.5" y="13.5" width="6" height="6" fill="#fff" stroke="#000"/><path d="M8 4h5M16.5 7v3h-2v2h2v2" stroke="#a00000" fill="none"/></svg>
<svg style="left:98px;top:779px;" width="19" height="19" viewBox="0 0 19 19"><rect x="3.5" y="3.5" width="14" height="15" fill="#808080"/><path d="M1.5 4.5 L5.5 0.5 H14.5 V15.5 H1.5Z" fill="#fff" stroke="#000"/><path d="M5.5 0.5V4.5H1.5" fill="none" stroke="#000"/><path d="M4 6.5h8M4 8.5h8M4 10.5h8M4 12.5h8" stroke="#808080" stroke-dasharray="2 1"/></svg>
<svg style="left:212px;top:778px;" width="21" height="22" viewBox="0 0 21 22"><rect x="0.5" y="0.5" width="12" height="12" fill="#fff" stroke="#000"/><text x="5.5" y="9.5" text-anchor="middle" font-family="Liberation Sans,sans-serif" font-size="11" font-weight="bold">a</text><path d="M2 11 h6" stroke="#000"/><rect x="9.5" y="8.5" width="10" height="12" fill="#fff" stroke="#000"/><path d="M11.5 10.5 L17.5 14.5 L11.5 18.5Z" fill="#20e0e0" stroke="#0030c0" stroke-width=".8"/></svg>
<svg style="left:344px;top:781px;" width="19" height="18" viewBox="0 0 19 18"><rect x="1.500" y="1.500" width="16" height="15" fill="#fff" stroke="#000" stroke-width="1"/><path d="M0 1h4M0 1v3M19 1h-4M18.500 1v3M0 17h4M0.500 17v-3M19 17h-4M18.500 17v-3" stroke="#f00000" stroke-width="1.600"/><path d="M4 8 Q9.500 3.500 15 7" stroke="#000" fill="none"/><path d="M11 14 L7 7" stroke="#000"/><path d="M3 14.500h13" stroke="#808080"/></svg>
<svg style="left:460px;top:779px;" width="24" height="20" viewBox="0 0 24 20"><path d="M1.5 3.5 Q7 0.5 11.5 3.5 Q16 0.5 22.5 3.5 V17.5 Q16 15 11.5 17.5 Q7 15 1.5 17.5Z" fill="#fff" stroke="#000"/><path d="M11.5 3.5V17.5" stroke="#000"/><path d="M3.5 6h6M3.5 8h6M3.5 10h6M3.5 12h6M13.5 6h7M13.5 8h7M13.5 10h7M13.5 12h7" stroke="#606060" stroke-width=".8"/><path d="M0.5 5v14h22v-14" stroke="#000" fill="none"/></svg>
<div style="left:8px;top:809px;width:197px;height:21px;border:1px solid;border-color:#a0a0a0 #fff #fff #a0a0a0"></div>
<div style="left:208px;top:809px;width:197px;height:21px;border:1px solid;border-color:#a0a0a0 #fff #fff #a0a0a0"></div>
<div style="left:407px;top:809px;width:839px;height:21px;border:1px solid;border-color:#a0a0a0 #fff #fff #a0a0a0"></div>
<span style="left:212px;top:815px;font-size:11px;letter-spacing:0.25px">(1) x=300, y=184, w=71, d=56</span>
<svg style="left:1256px;top:819px;" width="13" height="13" viewBox="0 0 13 13"><path d="M12 1 1 12M12 5 5 12M12 9 9 12" stroke="#a0a0a0" stroke-width="1.2"/><path d="M13 1 2 12M13 5 6 12M13 9 10 12" stroke="#fff" stroke-width="1"/></svg>

</body></html>
